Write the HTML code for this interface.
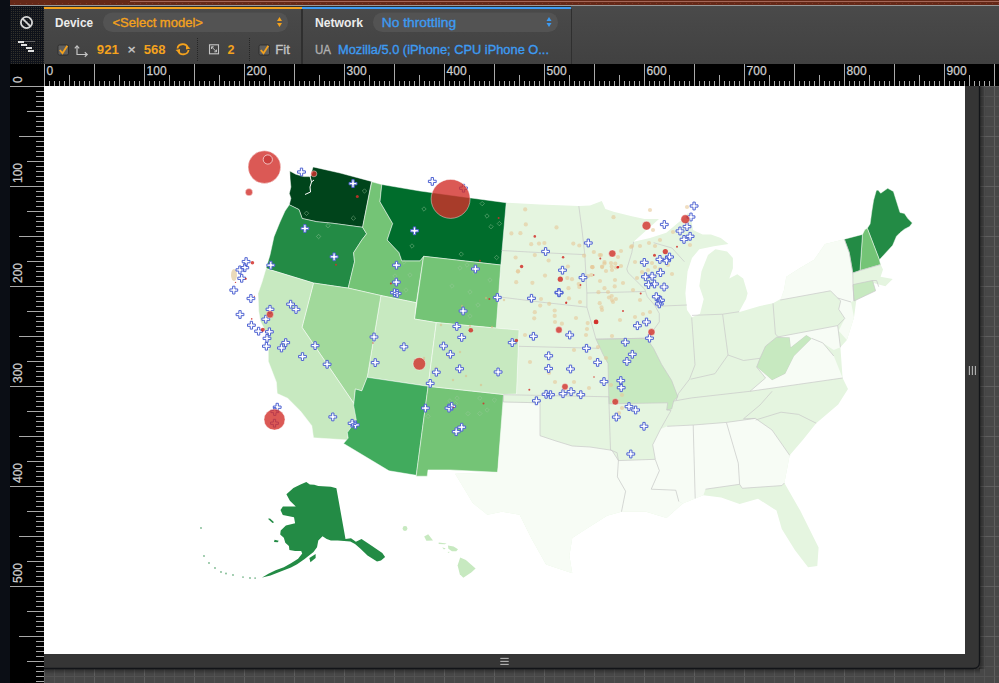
<!DOCTYPE html>
<html><head><meta charset="utf-8"><style>
html,body{margin:0;padding:0;width:999px;height:683px;overflow:hidden;background:#474747}
svg{position:absolute;left:0;top:0;font-family:"Liberation Sans",sans-serif}
</style></head><body>
<svg width="999" height="683" viewBox="0 0 999 683">

<rect x="44" y="86" width="955" height="597" fill="#474747"/>
<line x1="44.5" y1="86" x2="44.5" y2="683" stroke="#5e5e5e"/><line x1="54.5" y1="86" x2="54.5" y2="683" stroke="#525252"/><line x1="64.5" y1="86" x2="64.5" y2="683" stroke="#525252"/><line x1="74.5" y1="86" x2="74.5" y2="683" stroke="#525252"/><line x1="84.5" y1="86" x2="84.5" y2="683" stroke="#525252"/><line x1="94.5" y1="86" x2="94.5" y2="683" stroke="#5e5e5e"/><line x1="104.5" y1="86" x2="104.5" y2="683" stroke="#525252"/><line x1="114.5" y1="86" x2="114.5" y2="683" stroke="#525252"/><line x1="124.5" y1="86" x2="124.5" y2="683" stroke="#525252"/><line x1="134.5" y1="86" x2="134.5" y2="683" stroke="#525252"/><line x1="144.5" y1="86" x2="144.5" y2="683" stroke="#5e5e5e"/><line x1="154.5" y1="86" x2="154.5" y2="683" stroke="#525252"/><line x1="164.5" y1="86" x2="164.5" y2="683" stroke="#525252"/><line x1="174.5" y1="86" x2="174.5" y2="683" stroke="#525252"/><line x1="184.5" y1="86" x2="184.5" y2="683" stroke="#525252"/><line x1="194.5" y1="86" x2="194.5" y2="683" stroke="#5e5e5e"/><line x1="204.5" y1="86" x2="204.5" y2="683" stroke="#525252"/><line x1="214.5" y1="86" x2="214.5" y2="683" stroke="#525252"/><line x1="224.5" y1="86" x2="224.5" y2="683" stroke="#525252"/><line x1="234.5" y1="86" x2="234.5" y2="683" stroke="#525252"/><line x1="244.5" y1="86" x2="244.5" y2="683" stroke="#5e5e5e"/><line x1="254.5" y1="86" x2="254.5" y2="683" stroke="#525252"/><line x1="264.5" y1="86" x2="264.5" y2="683" stroke="#525252"/><line x1="274.5" y1="86" x2="274.5" y2="683" stroke="#525252"/><line x1="284.5" y1="86" x2="284.5" y2="683" stroke="#525252"/><line x1="294.5" y1="86" x2="294.5" y2="683" stroke="#5e5e5e"/><line x1="304.5" y1="86" x2="304.5" y2="683" stroke="#525252"/><line x1="314.5" y1="86" x2="314.5" y2="683" stroke="#525252"/><line x1="324.5" y1="86" x2="324.5" y2="683" stroke="#525252"/><line x1="334.5" y1="86" x2="334.5" y2="683" stroke="#525252"/><line x1="344.5" y1="86" x2="344.5" y2="683" stroke="#5e5e5e"/><line x1="354.5" y1="86" x2="354.5" y2="683" stroke="#525252"/><line x1="364.5" y1="86" x2="364.5" y2="683" stroke="#525252"/><line x1="374.5" y1="86" x2="374.5" y2="683" stroke="#525252"/><line x1="384.5" y1="86" x2="384.5" y2="683" stroke="#525252"/><line x1="394.5" y1="86" x2="394.5" y2="683" stroke="#5e5e5e"/><line x1="404.5" y1="86" x2="404.5" y2="683" stroke="#525252"/><line x1="414.5" y1="86" x2="414.5" y2="683" stroke="#525252"/><line x1="424.5" y1="86" x2="424.5" y2="683" stroke="#525252"/><line x1="434.5" y1="86" x2="434.5" y2="683" stroke="#525252"/><line x1="444.5" y1="86" x2="444.5" y2="683" stroke="#5e5e5e"/><line x1="454.5" y1="86" x2="454.5" y2="683" stroke="#525252"/><line x1="464.5" y1="86" x2="464.5" y2="683" stroke="#525252"/><line x1="474.5" y1="86" x2="474.5" y2="683" stroke="#525252"/><line x1="484.5" y1="86" x2="484.5" y2="683" stroke="#525252"/><line x1="494.5" y1="86" x2="494.5" y2="683" stroke="#5e5e5e"/><line x1="504.5" y1="86" x2="504.5" y2="683" stroke="#525252"/><line x1="514.5" y1="86" x2="514.5" y2="683" stroke="#525252"/><line x1="524.5" y1="86" x2="524.5" y2="683" stroke="#525252"/><line x1="534.5" y1="86" x2="534.5" y2="683" stroke="#525252"/><line x1="544.5" y1="86" x2="544.5" y2="683" stroke="#5e5e5e"/><line x1="554.5" y1="86" x2="554.5" y2="683" stroke="#525252"/><line x1="564.5" y1="86" x2="564.5" y2="683" stroke="#525252"/><line x1="574.5" y1="86" x2="574.5" y2="683" stroke="#525252"/><line x1="584.5" y1="86" x2="584.5" y2="683" stroke="#525252"/><line x1="594.5" y1="86" x2="594.5" y2="683" stroke="#5e5e5e"/><line x1="604.5" y1="86" x2="604.5" y2="683" stroke="#525252"/><line x1="614.5" y1="86" x2="614.5" y2="683" stroke="#525252"/><line x1="624.5" y1="86" x2="624.5" y2="683" stroke="#525252"/><line x1="634.5" y1="86" x2="634.5" y2="683" stroke="#525252"/><line x1="644.5" y1="86" x2="644.5" y2="683" stroke="#5e5e5e"/><line x1="654.5" y1="86" x2="654.5" y2="683" stroke="#525252"/><line x1="664.5" y1="86" x2="664.5" y2="683" stroke="#525252"/><line x1="674.5" y1="86" x2="674.5" y2="683" stroke="#525252"/><line x1="684.5" y1="86" x2="684.5" y2="683" stroke="#525252"/><line x1="694.5" y1="86" x2="694.5" y2="683" stroke="#5e5e5e"/><line x1="704.5" y1="86" x2="704.5" y2="683" stroke="#525252"/><line x1="714.5" y1="86" x2="714.5" y2="683" stroke="#525252"/><line x1="724.5" y1="86" x2="724.5" y2="683" stroke="#525252"/><line x1="734.5" y1="86" x2="734.5" y2="683" stroke="#525252"/><line x1="744.5" y1="86" x2="744.5" y2="683" stroke="#5e5e5e"/><line x1="754.5" y1="86" x2="754.5" y2="683" stroke="#525252"/><line x1="764.5" y1="86" x2="764.5" y2="683" stroke="#525252"/><line x1="774.5" y1="86" x2="774.5" y2="683" stroke="#525252"/><line x1="784.5" y1="86" x2="784.5" y2="683" stroke="#525252"/><line x1="794.5" y1="86" x2="794.5" y2="683" stroke="#5e5e5e"/><line x1="804.5" y1="86" x2="804.5" y2="683" stroke="#525252"/><line x1="814.5" y1="86" x2="814.5" y2="683" stroke="#525252"/><line x1="824.5" y1="86" x2="824.5" y2="683" stroke="#525252"/><line x1="834.5" y1="86" x2="834.5" y2="683" stroke="#525252"/><line x1="844.5" y1="86" x2="844.5" y2="683" stroke="#5e5e5e"/><line x1="854.5" y1="86" x2="854.5" y2="683" stroke="#525252"/><line x1="864.5" y1="86" x2="864.5" y2="683" stroke="#525252"/><line x1="874.5" y1="86" x2="874.5" y2="683" stroke="#525252"/><line x1="884.5" y1="86" x2="884.5" y2="683" stroke="#525252"/><line x1="894.5" y1="86" x2="894.5" y2="683" stroke="#5e5e5e"/><line x1="904.5" y1="86" x2="904.5" y2="683" stroke="#525252"/><line x1="914.5" y1="86" x2="914.5" y2="683" stroke="#525252"/><line x1="924.5" y1="86" x2="924.5" y2="683" stroke="#525252"/><line x1="934.5" y1="86" x2="934.5" y2="683" stroke="#525252"/><line x1="944.5" y1="86" x2="944.5" y2="683" stroke="#5e5e5e"/><line x1="954.5" y1="86" x2="954.5" y2="683" stroke="#525252"/><line x1="964.5" y1="86" x2="964.5" y2="683" stroke="#525252"/><line x1="974.5" y1="86" x2="974.5" y2="683" stroke="#525252"/><line x1="984.5" y1="86" x2="984.5" y2="683" stroke="#525252"/><line x1="994.5" y1="86" x2="994.5" y2="683" stroke="#5e5e5e"/><line x1="44" y1="86.5" x2="999" y2="86.5" stroke="#5e5e5e"/><line x1="44" y1="96.5" x2="999" y2="96.5" stroke="#525252"/><line x1="44" y1="106.5" x2="999" y2="106.5" stroke="#525252"/><line x1="44" y1="116.5" x2="999" y2="116.5" stroke="#525252"/><line x1="44" y1="126.5" x2="999" y2="126.5" stroke="#525252"/><line x1="44" y1="136.5" x2="999" y2="136.5" stroke="#5e5e5e"/><line x1="44" y1="146.5" x2="999" y2="146.5" stroke="#525252"/><line x1="44" y1="156.5" x2="999" y2="156.5" stroke="#525252"/><line x1="44" y1="166.5" x2="999" y2="166.5" stroke="#525252"/><line x1="44" y1="176.5" x2="999" y2="176.5" stroke="#525252"/><line x1="44" y1="186.5" x2="999" y2="186.5" stroke="#5e5e5e"/><line x1="44" y1="196.5" x2="999" y2="196.5" stroke="#525252"/><line x1="44" y1="206.5" x2="999" y2="206.5" stroke="#525252"/><line x1="44" y1="216.5" x2="999" y2="216.5" stroke="#525252"/><line x1="44" y1="226.5" x2="999" y2="226.5" stroke="#525252"/><line x1="44" y1="236.5" x2="999" y2="236.5" stroke="#5e5e5e"/><line x1="44" y1="246.5" x2="999" y2="246.5" stroke="#525252"/><line x1="44" y1="256.5" x2="999" y2="256.5" stroke="#525252"/><line x1="44" y1="266.5" x2="999" y2="266.5" stroke="#525252"/><line x1="44" y1="276.5" x2="999" y2="276.5" stroke="#525252"/><line x1="44" y1="286.5" x2="999" y2="286.5" stroke="#5e5e5e"/><line x1="44" y1="296.5" x2="999" y2="296.5" stroke="#525252"/><line x1="44" y1="306.5" x2="999" y2="306.5" stroke="#525252"/><line x1="44" y1="316.5" x2="999" y2="316.5" stroke="#525252"/><line x1="44" y1="326.5" x2="999" y2="326.5" stroke="#525252"/><line x1="44" y1="336.5" x2="999" y2="336.5" stroke="#5e5e5e"/><line x1="44" y1="346.5" x2="999" y2="346.5" stroke="#525252"/><line x1="44" y1="356.5" x2="999" y2="356.5" stroke="#525252"/><line x1="44" y1="366.5" x2="999" y2="366.5" stroke="#525252"/><line x1="44" y1="376.5" x2="999" y2="376.5" stroke="#525252"/><line x1="44" y1="386.5" x2="999" y2="386.5" stroke="#5e5e5e"/><line x1="44" y1="396.5" x2="999" y2="396.5" stroke="#525252"/><line x1="44" y1="406.5" x2="999" y2="406.5" stroke="#525252"/><line x1="44" y1="416.5" x2="999" y2="416.5" stroke="#525252"/><line x1="44" y1="426.5" x2="999" y2="426.5" stroke="#525252"/><line x1="44" y1="436.5" x2="999" y2="436.5" stroke="#5e5e5e"/><line x1="44" y1="446.5" x2="999" y2="446.5" stroke="#525252"/><line x1="44" y1="456.5" x2="999" y2="456.5" stroke="#525252"/><line x1="44" y1="466.5" x2="999" y2="466.5" stroke="#525252"/><line x1="44" y1="476.5" x2="999" y2="476.5" stroke="#525252"/><line x1="44" y1="486.5" x2="999" y2="486.5" stroke="#5e5e5e"/><line x1="44" y1="496.5" x2="999" y2="496.5" stroke="#525252"/><line x1="44" y1="506.5" x2="999" y2="506.5" stroke="#525252"/><line x1="44" y1="516.5" x2="999" y2="516.5" stroke="#525252"/><line x1="44" y1="526.5" x2="999" y2="526.5" stroke="#525252"/><line x1="44" y1="536.5" x2="999" y2="536.5" stroke="#5e5e5e"/><line x1="44" y1="546.5" x2="999" y2="546.5" stroke="#525252"/><line x1="44" y1="556.5" x2="999" y2="556.5" stroke="#525252"/><line x1="44" y1="566.5" x2="999" y2="566.5" stroke="#525252"/><line x1="44" y1="576.5" x2="999" y2="576.5" stroke="#525252"/><line x1="44" y1="586.5" x2="999" y2="586.5" stroke="#5e5e5e"/><line x1="44" y1="596.5" x2="999" y2="596.5" stroke="#525252"/><line x1="44" y1="606.5" x2="999" y2="606.5" stroke="#525252"/><line x1="44" y1="616.5" x2="999" y2="616.5" stroke="#525252"/><line x1="44" y1="626.5" x2="999" y2="626.5" stroke="#525252"/><line x1="44" y1="636.5" x2="999" y2="636.5" stroke="#5e5e5e"/><line x1="44" y1="646.5" x2="999" y2="646.5" stroke="#525252"/><line x1="44" y1="656.5" x2="999" y2="656.5" stroke="#525252"/><line x1="44" y1="666.5" x2="999" y2="666.5" stroke="#525252"/><line x1="44" y1="676.5" x2="999" y2="676.5" stroke="#525252"/>
<defs>
<linearGradient id="shR" x1="0" y1="0" x2="1" y2="0"><stop offset="0" stop-color="#000" stop-opacity="0.45"/><stop offset="1" stop-color="#000" stop-opacity="0"/></linearGradient>
<linearGradient id="shB" x1="0" y1="0" x2="0" y2="1"><stop offset="0" stop-color="#000" stop-opacity="0.45"/><stop offset="1" stop-color="#000" stop-opacity="0"/></linearGradient>
</defs>
<rect x="979" y="86" width="7" height="583" fill="url(#shR)"/>
<rect x="44" y="668" width="936" height="6" fill="url(#shB)"/>
<rect x="44" y="86" width="935.5" height="582.5" rx="0" fill="#353535"/>
<path d="M979.5,86 L979.5,662 Q979.5,668.5 973,668.5 L44,668.5" fill="none" stroke="#121418" stroke-width="1.3"/>
<rect x="44" y="86" width="921" height="568" fill="#ffffff"/>
<g stroke="#b5b5b5" stroke-width="1.1"><line x1="500.3" y1="658.4" x2="508.7" y2="658.4"/><line x1="500.3" y1="661.4" x2="508.7" y2="661.4"/><line x1="500.3" y1="664.4" x2="508.7" y2="664.4"/></g>
<g stroke="#b5b5b5" stroke-width="1.1"><line x1="969.4" y1="366" x2="969.4" y2="375"/><line x1="972.4" y1="366" x2="972.4" y2="375"/><line x1="975.4" y1="366" x2="975.4" y2="375"/></g>

<g stroke-linejoin="round"><path d="M506.2,202.7 L540.0,204.5 L578.8,206.0 L590.0,205.4 L601.8,200.9 L605.4,209.0 L613.6,211.8 L631.8,216.3 L644.5,219.0 L655.0,219.0 L659.0,219.0 L633.6,241.8 L650.0,238.0 L666.3,232.7 L677.2,223.6 L684.0,218.0 L688.0,213.0 L690.5,215.0 L693.0,230.0 L702.6,234.5 L711.0,234.6 L720.8,238.1 L728.5,244.1 L713.9,246.3 L699.3,249.3 L692.0,258.0 L687.6,271.2 L685.4,293.2 L687.0,310.0 L692.0,317.3 L700.0,313.7 L703.7,299.0 L699.3,285.9 L701.5,271.2 L708.0,255.1 L715.4,249.3 L727.1,251.5 L732.9,258.0 L732.9,268.3 L729.3,278.5 L737.3,274.2 L743.2,278.5 L747.6,293.2 L746.1,299.0 L738.8,312.2 L760.0,306.0 L773.0,303.3 L781.0,298.8 L784.0,290.0 L786.3,276.7 L800.0,268.0 L814.1,259.8 L825.0,244.0 L844.3,239.2 L862.5,234.4 L867.3,228.3 L870.1,223.9 L871.9,210.7 L873.6,200.2 L876.3,190.5 L878.0,190.1 L880.7,193.2 L887.7,188.3 L893.4,191.4 L900.0,212.5 L904.4,213.4 L907.9,218.6 L912.3,223.0 L909.6,226.5 L904.4,229.2 L900.0,232.7 L896.5,236.2 L892.7,245.3 L879.4,259.8 L880.6,264.6 L883.0,269.4 L880.6,276.7 L892.7,279.0 L885.4,286.3 L873.4,283.0 L856.4,299.6 L854.0,317.4 L846.9,340.0 L840.4,347.3 L842.6,378.0 L848.0,389.0 L838.2,404.5 L816.2,423.2 L803.0,439.7 L789.7,455.3 L784.4,483.0 L800.2,510.6 L818.6,547.5 L817.3,566.0 L808.1,567.3 L795.0,550.2 L781.8,529.0 L776.5,510.6 L758.0,498.8 L739.6,504.0 L721.2,497.5 L703.4,495.3 L695.2,498.4 L682.9,503.5 L666.5,517.9 L646.0,511.7 L621.5,511.7 L607.1,515.8 L584.6,530.1 L572.3,538.0 L569.4,555.7 L572.3,573.3 L546.0,564.5 L531.3,538.2 L519.6,514.7 L502.0,511.8 L487.4,514.7 L472.7,503.0 L455.1,473.7 L497.6,472.3 L503.5,394.5 L516.5,394.0 L519.0,330.0 L496.2,328.1 L500.8,265.0 Z" fill="#e5f5e0"/><path d="M289.8,171.0 L295.7,174.2 L303.8,176.6 L310.2,176.6 L313.1,166.9 L340.0,173.0 L371.5,181.4 L362.6,227.3 L332.8,223.3 L316.7,221.7 L302.2,218.5 L299.0,209.6 L289.3,204.8 L290.9,198.3 L289.3,193.5 L290.9,187.0 L290.1,179.0 Z" fill="#00441b" stroke="#ffffff" stroke-opacity="0.6" stroke-width="0.8"/><path d="M289.3,204.8 L299.0,209.6 L302.2,218.5 L316.7,221.7 L332.8,223.3 L362.6,227.3 L366.6,233.8 L361.8,240.0 L353.6,252.7 L354.5,261.8 L348.2,288.1 L313.5,283.0 L266.0,268.5 L270.0,255.0 L274.0,236.7 L280.0,222.0 L285.0,211.0 Z" fill="#238b45" stroke="#ffffff" stroke-opacity="0.6" stroke-width="0.8"/><path d="M371.8,181.8 L381.8,184.5 L380.0,201.8 L392.7,223.6 L387.2,240.0 L399.0,252.6 L401.8,260.8 L420.0,260.8 L423.6,256.3 L416.3,302.7 L380.9,295.5 L348.2,288.1 L354.5,261.8 L353.6,252.7 L361.8,240.0 L366.6,233.8 L362.6,227.3 Z" fill="#74c476" stroke="#ffffff" stroke-opacity="0.6" stroke-width="0.8"/><path d="M381.8,184.5 L420.0,191.0 L460.0,196.5 L506.2,202.7 L500.8,265.0 L423.6,256.3 L420.0,260.8 L401.8,260.8 L399.0,252.6 L387.2,240.0 L392.7,223.6 L380.0,201.8 Z" fill="#006d2c" stroke="#ffffff" stroke-opacity="0.6" stroke-width="0.8"/><path d="M423.6,256.3 L500.8,265.0 L496.2,328.1 L436.3,322.6 L414.5,319.0 Z" fill="#74c476" stroke="#ffffff" stroke-opacity="0.6" stroke-width="0.8"/><path d="M380.9,295.5 L416.3,302.7 L414.5,319.0 L436.3,322.6 L428.1,386.3 L367.2,377.3 Z" fill="#c7e9c0" stroke="#ffffff" stroke-opacity="0.6" stroke-width="0.8"/><path d="M313.5,283.0 L348.2,288.1 L380.9,295.5 L367.2,377.3 L361.8,390.9 L355.4,389.0 L353.7,403.2 L302.0,327.3 Z" fill="#a1d99b" stroke="#ffffff" stroke-opacity="0.6" stroke-width="0.8"/><path d="M266.0,268.5 L313.5,283.0 L302.0,327.3 L353.7,403.2 L356.5,419.0 L347.5,433.0 L348.5,440.0 L313.5,437.8 L311.8,425.7 L300.6,411.2 L287.7,398.3 L277.2,393.5 L276.4,382.2 L268.3,361.3 L268.3,350.0 L270.0,346.7 L268.3,337.0 L260.3,321.0 L258.7,311.0 L258.0,293.5 L262.0,282.0 Z" fill="#c7e9c0" stroke="#ffffff" stroke-opacity="0.6" stroke-width="0.8"/><path d="M367.2,377.3 L428.1,386.3 L416.3,475.3 L389.0,470.8 L343.6,443.5 L348.2,438.1 L347.3,432.6 L356.3,420.0 L353.6,405.4 L355.4,389.0 L361.8,390.9 Z" fill="#41ab5d" stroke="#ffffff" stroke-opacity="0.6" stroke-width="0.8"/><path d="M428.1,386.3 L503.5,394.5 L497.6,472.3 L449.9,469.9 L428.0,469.9 L427.2,476.2 L416.3,476.2 L416.3,475.3 Z" fill="#74c476" stroke="#ffffff" stroke-opacity="0.6" stroke-width="0.8"/><path d="M436.3,322.6 L496.2,328.1 L519.0,330.0 L516.5,394.0 L503.5,394.5 L428.1,386.3 Z" fill="#c7e9c0" stroke="#ffffff" stroke-opacity="0.6" stroke-width="0.8"/><path d="M503.5,402.0 L540.0,403.4 L540.0,435.7 L556.0,441.0 L572.3,446.0 L590.0,447.0 L611.9,450.3 L618.4,460.5 L617.4,476.9 L625.6,491.2 L621.5,511.7 L607.1,515.8 L584.6,530.1 L572.3,538.0 L569.4,555.7 L572.3,573.3 L546.0,564.5 L531.3,538.2 L519.6,514.7 L502.0,511.8 L487.4,514.7 L472.7,503.0 L455.1,473.7 L497.6,472.3 Z" fill="#f7fcf5"/><path d="M596.0,339.2 L646.5,338.2 L653.5,348.3 L661.6,364.4 L671.7,380.6 L677.8,396.8 L673.7,400.8 L671.7,408.9 L666.7,409.9 L667.7,402.8 L609.0,403.8 L608.0,363.4 L603.0,354.3 Z" fill="#c7e9c0" stroke="#c9c9c9" stroke-width="0.7"/><path d="M760.0,358.3 L765.5,346.2 L776.5,337.3 L789.7,337.3 L790.8,347.3 L806.3,335.1 L811.8,338.4 L794.1,356.1 L785.3,373.7 L772.1,380.3 L756.7,367.0 Z" fill="#c7e9c0" stroke="#c9c9c9" stroke-width="0.7"/><path d="M655.3,459.5 L652.7,444.8 L660.6,429.0 L667.2,426.3 L693.2,425.0 L695.2,498.4 L682.9,503.5 L678.8,501.5 L675.8,490.2 L651.2,489.2 L659.4,470.7 Z" fill="#f7fcf5"/><path d="M693.2,425.0 L726.4,422.4 L738.3,463.2 L739.6,484.3 L705.5,489.2 L703.4,495.3 L695.2,498.4 Z" fill="#f7fcf5"/><path d="M726.4,422.4 L755.4,418.4 L772.0,430.0 L789.7,455.3 L784.4,483.0 L781.8,485.6 L742.3,488.3 L739.6,484.3 L738.3,463.2 Z" fill="#f7fcf5"/><path d="M618.4,460.5 L655.3,459.5 L659.4,470.7 L651.2,489.2 L675.8,490.2 L678.8,501.5 L682.9,503.5 L666.5,517.9 L646.0,511.7 L621.5,511.7 L625.6,491.2 L617.4,476.9 Z" fill="#f7fcf5"/><path d="M756.7,367.0 L772.1,380.3 L785.3,373.7 L794.1,356.1 L811.8,338.4 L822.8,342.9 L833.8,356.0 L842.6,378.0 L750.0,391.3 L765.5,378.0 Z" fill="#f7fcf5"/><path d="M780.3,300.0 L784.0,290.0 L786.3,276.7 L800.0,268.0 L814.1,259.8 L825.0,244.0 L844.3,239.2 L849.2,252.5 L852.8,273.0 L854.0,300.8 L851.0,302.0 L837.7,298.0 L830.5,290.8 Z" fill="#f7fcf5"/><path d="M837.7,298.0 L851.0,302.0 L854.0,317.4 L846.9,340.0 L838.7,330.7 L844.8,318.4 L838.7,309.2 L840.7,301.0 Z" fill="#f7fcf5"/><path d="M778.2,336.9 L837.7,325.6 L840.4,347.3 L833.8,350.0 L822.8,342.9 L811.8,338.4 L806.3,335.1 L790.8,347.3 L789.7,337.3 Z" fill="#f7fcf5"/><path d="M876.3,190.5 L878.0,190.1 L880.7,193.2 L887.7,188.3 L893.4,191.4 L900.0,212.5 L904.4,213.4 L907.9,218.6 L912.3,223.0 L909.6,226.5 L904.4,229.2 L900.0,232.7 L896.5,236.2 L892.7,245.3 L879.4,259.8 L867.3,228.3 L870.1,223.9 L871.9,210.7 L873.6,200.2 Z" fill="#238b45" stroke="#ffffff" stroke-opacity="0.6" stroke-width="0.8"/><path d="M864.9,229.5 L867.3,228.3 L879.4,259.8 L880.6,264.6 L860.0,270.6 L862.5,234.4 Z" fill="#74c476" stroke="#ffffff" stroke-opacity="0.6" stroke-width="0.8"/><path d="M844.3,239.2 L862.5,234.4 L860.0,270.6 L852.8,273.0 L849.2,252.5 Z" fill="#238b45" stroke="#ffffff" stroke-opacity="0.6" stroke-width="0.8"/><path d="M853.0,284.6 L872.5,280.5 L875.6,290.8 L854.0,301.0 Z" fill="#c7e9c0" stroke="#c9c9c9" stroke-width="0.7"/><path d="M286.4,494.3 L293.4,487.9 L300.5,484.4 L306.3,482.0 L309.8,484.4 L314.2,484.7 L318.3,486.1 L330.9,486.8 L336.4,488.2 L345.5,539.0 L351.0,538.3 L355.9,541.8 L361.5,539.0 L369.8,544.6 L382.3,552.9 L385.1,557.1 L381.0,560.5 L377.0,561.5 L367.5,555.5 L360.5,548.8 L355.0,544.0 L350.3,541.5 L337.8,540.4 L330.9,540.4 L326.7,539.0 L322.5,536.2 L318.3,540.4 L317.0,547.3 L313.5,552.0 L304.3,559.2 L297.1,564.3 L291.0,567.4 L280.7,571.5 L270.5,575.6 L262.3,577.6 L261.3,578.1 L268.4,573.8 L275.6,570.3 L283.8,567.3 L291.0,563.3 L298.1,558.8 L302.2,553.5 L301.2,551.0 L295.1,551.0 L289.4,550.0 L288.9,545.9 L285.3,542.8 L283.8,537.7 L280.2,534.6 L280.7,530.5 L285.9,525.4 L295.1,523.3 L294.0,517.2 L282.8,515.1 L280.5,510.1 L282.9,506.6 L295.8,506.6 L289.9,500.8 Z" fill="#238b45"/><path d="M309.4,558.1 L315.6,554.0 L315.6,558.1 L310.4,562.2 Z" fill="#238b45"/><path d="M274.6,539.7 L278.7,540.7 L277.7,542.3 L274.0,542.0 Z" fill="#238b45"/><path d="M267.9,518.7 L270.0,518.5 L274.1,522.3 L272.5,523.0 Z" fill="#238b45"/><circle cx="243" cy="577.1" r="0.9" fill="#238b45" opacity="0.6"/><circle cx="233" cy="575" r="0.9" fill="#238b45" opacity="0.6"/><circle cx="221" cy="572" r="0.9" fill="#238b45" opacity="0.6"/><circle cx="215" cy="568" r="0.9" fill="#238b45" opacity="0.6"/><circle cx="204" cy="556" r="0.9" fill="#238b45" opacity="0.6"/><circle cx="201" cy="528" r="0.9" fill="#238b45" opacity="0.6"/><circle cx="255.1" cy="578.1" r="0.9" fill="#238b45" opacity="0.6"/><circle cx="250" cy="578" r="0.9" fill="#238b45" opacity="0.6"/><circle cx="226" cy="573.5" r="0.9" fill="#238b45" opacity="0.6"/><circle cx="209" cy="563" r="0.9" fill="#238b45" opacity="0.6"/><path d="M424.2,536.4 L428.2,534.2 L433.0,540.4 L426.4,540.8 Z" fill="#c7e9c0"/><path d="M438.7,542.6 L446.6,543.4 L444.9,544.3 L438.7,543.9 Z" fill="#c7e9c0"/><path d="M442.2,547.4 L445.7,548.3 L444.0,549.6 Z" fill="#c7e9c0"/><path d="M447.9,545.6 L453.6,546.5 L458.0,549.2 L456.3,551.3 L451.9,551.3 L448.4,548.7 Z" fill="#c7e9c0"/><path d="M447.5,552.0 L449.5,551.8 L449.0,553.0 Z" fill="#c7e9c0"/><path d="M460.2,557.5 L465.9,560.1 L475.6,568.5 L471.2,572.4 L463.3,577.7 L459.8,574.2 L457.6,565.4 Z" fill="#c7e9c0"/><circle cx="405" cy="528.5" r="2.4" fill="#c7e9c0"/><path d="M313,172 L310,176 L311.5,182 L310,187 L310.5,192 L305,194.5 M311.5,182 L314,180" fill="none" stroke="#fff" stroke-width="1"/><ellipse cx="234" cy="275" rx="3" ry="6" fill="#e6d3ae" opacity="0.85"/><path d="M501.6,250.5 L540.0,252.6 L584.8,254.6" fill="none" stroke="#c9c9c9" stroke-width="0.7"/><path d="M500.2,297.0 L540.0,302.0 L586.9,307.2" fill="none" stroke="#c9c9c9" stroke-width="0.7"/><path d="M519.0,346.3 L599.0,348.3" fill="none" stroke="#c9c9c9" stroke-width="0.7"/><path d="M504.0,394.7 L609.0,396.8" fill="none" stroke="#c9c9c9" stroke-width="0.7"/><path d="M503.5,402.0 L540.4,402.8" fill="none" stroke="#c9c9c9" stroke-width="0.7"/><path d="M578.8,206.0 L582.0,230.0 L584.8,254.6 L586.9,293.0 L586.9,307.2 L592.0,325.0 L596.0,339.2" fill="none" stroke="#c9c9c9" stroke-width="0.7"/><path d="M586.9,293.0 L644.9,291.5" fill="none" stroke="#c9c9c9" stroke-width="0.7"/><path d="M596.0,339.2 L646.5,338.2" fill="none" stroke="#c9c9c9" stroke-width="0.7"/><path d="M633.6,241.8 L631.8,252.6 L626.8,269.0 L628.0,272.6 L644.9,289.4 L647.3,296.7 L654.5,305.0 L659.3,313.5 L659.3,321.9 L653.5,330.0 L646.5,338.2" fill="none" stroke="#c9c9c9" stroke-width="0.7"/><path d="M656.0,306.3 L686.9,305.0" fill="none" stroke="#c9c9c9" stroke-width="0.7"/><path d="M653.6,242.7 L672.0,248.0 L684.4,261.7" fill="none" stroke="#c9c9c9" stroke-width="0.7"/><path d="M609.0,396.8 L609.0,403.8 L610.5,450.0 L617.1,452.7 L618.4,460.6 L655.3,459.3" fill="none" stroke="#c9c9c9" stroke-width="0.7"/><path d="M540.0,403.4 L540.0,435.7 L556.0,441.0 L572.3,446.0 L590.0,447.0 L611.9,450.3" fill="none" stroke="#c9c9c9" stroke-width="0.7"/><path d="M666.7,409.9 L671.0,410.5 L660.6,429.0 L652.7,444.8 L655.3,459.3" fill="none" stroke="#c9c9c9" stroke-width="0.7"/><path d="M667.2,426.3 L693.5,425.0 L726.4,422.4 L755.4,418.4 L743.5,418.8" fill="none" stroke="#c9c9c9" stroke-width="0.7"/><path d="M691.7,317.5 L695.0,364.9 L689.5,379.2 L678.5,393.5 L676.3,400.1" fill="none" stroke="#c9c9c9" stroke-width="0.7"/><path d="M692.0,315.4 L722.6,314.2 L739.2,311.7" fill="none" stroke="#c9c9c9" stroke-width="0.7"/><path d="M722.6,314.2 L728.0,355.0" fill="none" stroke="#c9c9c9" stroke-width="0.7"/><path d="M690.6,379.2 L714.9,373.7 L728.0,355.0 L743.5,360.5 L760.0,358.3" fill="none" stroke="#c9c9c9" stroke-width="0.7"/><path d="M673.0,401.2 L691.7,397.9 L750.0,391.3 L842.6,378.0" fill="none" stroke="#c9c9c9" stroke-width="0.7"/><path d="M772.1,391.3 L760.0,405.0 L743.5,418.8" fill="none" stroke="#c9c9c9" stroke-width="0.7"/><path d="M755.6,420.0 L781.0,412.2 L798.6,414.4 L816.2,423.2" fill="none" stroke="#c9c9c9" stroke-width="0.7"/><path d="M773.0,303.3 L775.4,334.0 L778.2,336.9" fill="none" stroke="#c9c9c9" stroke-width="0.7"/><path d="M618.4,460.5 L617.4,476.9 L625.6,491.2 L621.5,511.7" fill="none" stroke="#c9c9c9" stroke-width="0.7"/><path d="M611.9,450.3 L618.4,460.5" fill="none" stroke="#c9c9c9" stroke-width="0.7"/><path d="M655.3,459.5 L659.4,470.7 L651.2,489.2 L675.8,490.2 L678.8,501.5" fill="none" stroke="#c9c9c9" stroke-width="0.7"/><path d="M693.2,425.0 L695.2,498.4" fill="none" stroke="#c9c9c9" stroke-width="0.7"/><path d="M726.4,422.4 L738.3,463.2 L739.6,484.3" fill="none" stroke="#c9c9c9" stroke-width="0.7"/><path d="M705.5,489.2 L739.6,484.3 L742.3,488.3 L781.8,485.6 L784.4,483.0" fill="none" stroke="#c9c9c9" stroke-width="0.7"/><path d="M755.4,418.4 L772.0,430.0 L789.7,455.3" fill="none" stroke="#c9c9c9" stroke-width="0.7"/><path d="M750.0,391.3 L765.5,378.0 L756.7,367.0" fill="none" stroke="#c9c9c9" stroke-width="0.7"/><path d="M811.8,338.4 L822.8,342.9 L833.8,356.0" fill="none" stroke="#c9c9c9" stroke-width="0.7"/><path d="M778.2,336.9 L837.7,325.6 L840.4,347.3" fill="none" stroke="#c9c9c9" stroke-width="0.7"/><path d="M780.3,300.0 L830.5,290.8 L837.7,298.0 L851.0,302.0" fill="none" stroke="#c9c9c9" stroke-width="0.7"/><path d="M837.7,298.0 L840.7,301.0 L838.7,309.2 L844.8,318.4 L837.7,325.6" fill="none" stroke="#c9c9c9" stroke-width="0.7"/><path d="M844.3,239.2 L849.2,252.5 L852.8,273.0 L853.0,284.6 L854.0,301.0" fill="none" stroke="#c9c9c9" stroke-width="0.7"/><path d="M852.8,273.0 L860.0,270.6 L880.6,264.6" fill="none" stroke="#c9c9c9" stroke-width="0.7"/><path d="M872.5,280.5 L876.6,280.5 L878.7,286.7" fill="none" stroke="#c9c9c9" stroke-width="0.7"/><path d="M503.5,402.0 L503.5,394.5" fill="none" stroke="#c9c9c9" stroke-width="0.7"/><circle cx="525.2" cy="209.4" r="2.1" fill="#e6c898" opacity="0.6"/><circle cx="525.8" cy="224.4" r="2.1" fill="#e6c898" opacity="0.6"/><circle cx="556.5" cy="227.4" r="2.1" fill="#e6c898" opacity="0.6"/><circle cx="511.4" cy="233.4" r="2.1" fill="#e6c898" opacity="0.6"/><circle cx="520.4" cy="233.2" r="2.1" fill="#e6c898" opacity="0.6"/><circle cx="531.2" cy="244.2" r="2.1" fill="#e6c898" opacity="0.6"/><circle cx="539" cy="243.6" r="2.1" fill="#e6c898" opacity="0.6"/><circle cx="544.4" cy="243" r="2.1" fill="#e6c898" opacity="0.6"/><circle cx="573.3" cy="243.6" r="2.1" fill="#e6c898" opacity="0.6"/><circle cx="579.3" cy="245.5" r="2.1" fill="#e6c898" opacity="0.6"/><circle cx="613.5" cy="217.2" r="2.1" fill="#e6c898" opacity="0.6"/><circle cx="515.6" cy="257.5" r="2.1" fill="#e6c898" opacity="0.6"/><circle cx="534.8" cy="255.1" r="2.1" fill="#e6c898" opacity="0.6"/><circle cx="548.6" cy="260.5" r="2.1" fill="#e6c898" opacity="0.6"/><circle cx="584.1" cy="255.7" r="2.1" fill="#e6c898" opacity="0.6"/><circle cx="599.7" cy="255.1" r="2.1" fill="#e6c898" opacity="0.6"/><circle cx="604.5" cy="263.5" r="2.1" fill="#e6c898" opacity="0.6"/><circle cx="602.1" cy="267.1" r="2.1" fill="#e6c898" opacity="0.6"/><circle cx="611.7" cy="266.5" r="2.1" fill="#e6c898" opacity="0.6"/><circle cx="592.5" cy="267.1" r="2.1" fill="#e6c898" opacity="0.6"/><circle cx="567.9" cy="266.5" r="2.1" fill="#e6c898" opacity="0.6"/><circle cx="518" cy="271.3" r="2.1" fill="#e6c898" opacity="0.6"/><circle cx="615.3" cy="263.5" r="2.1" fill="#e6c898" opacity="0.6"/><circle cx="518" cy="271.4" r="2.1" fill="#e6c898" opacity="0.6"/><circle cx="545" cy="275.6" r="2.1" fill="#e6c898" opacity="0.6"/><circle cx="516.2" cy="282.2" r="2.1" fill="#e6c898" opacity="0.6"/><circle cx="532.4" cy="282.8" r="2.1" fill="#e6c898" opacity="0.6"/><circle cx="567.3" cy="278" r="2.1" fill="#e6c898" opacity="0.6"/><circle cx="572" cy="279.2" r="2.1" fill="#e6c898" opacity="0.6"/><circle cx="568.5" cy="288.2" r="2.1" fill="#e6c898" opacity="0.6"/><circle cx="578.7" cy="284" r="2.1" fill="#e6c898" opacity="0.6"/><circle cx="579.3" cy="287" r="2.1" fill="#e6c898" opacity="0.6"/><circle cx="569" cy="298.4" r="2.1" fill="#e6c898" opacity="0.6"/><circle cx="540.2" cy="305.6" r="2.1" fill="#e6c898" opacity="0.6"/><circle cx="549.2" cy="303.8" r="2.1" fill="#e6c898" opacity="0.6"/><circle cx="554.7" cy="310.5" r="2.1" fill="#e6c898" opacity="0.6"/><circle cx="534.8" cy="312.2" r="2.1" fill="#e6c898" opacity="0.6"/><circle cx="554.7" cy="315.9" r="2.1" fill="#e6c898" opacity="0.6"/><circle cx="534.2" cy="318.3" r="2.1" fill="#e6c898" opacity="0.6"/><circle cx="561.9" cy="323.7" r="2.1" fill="#e6c898" opacity="0.6"/><circle cx="587.7" cy="323.1" r="2.1" fill="#e6c898" opacity="0.6"/><circle cx="592.5" cy="267.2" r="2.1" fill="#e6c898" opacity="0.6"/><circle cx="591.3" cy="275" r="2.1" fill="#e6c898" opacity="0.6"/><circle cx="602.1" cy="266.6" r="2.1" fill="#e6c898" opacity="0.6"/><circle cx="604.5" cy="288.2" r="2.1" fill="#e6c898" opacity="0.6"/><circle cx="614.7" cy="286.4" r="2.1" fill="#e6c898" opacity="0.6"/><circle cx="598.5" cy="292.2" r="2.1" fill="#e6c898" opacity="0.6"/><circle cx="611.7" cy="296" r="2.1" fill="#e6c898" opacity="0.6"/><circle cx="615.9" cy="299" r="2.1" fill="#e6c898" opacity="0.6"/><circle cx="599.7" cy="303.2" r="2.1" fill="#e6c898" opacity="0.6"/><circle cx="601.5" cy="307.4" r="2.1" fill="#e6c898" opacity="0.6"/><circle cx="609" cy="297.5" r="2.1" fill="#e6c898" opacity="0.6"/><circle cx="612" cy="300" r="2.1" fill="#e6c898" opacity="0.6"/><circle cx="593.8" cy="252" r="2.1" fill="#e6c898" opacity="0.6"/><circle cx="601" cy="255" r="2.1" fill="#e6c898" opacity="0.6"/><circle cx="604.5" cy="262" r="2.1" fill="#e6c898" opacity="0.6"/><circle cx="611" cy="263" r="2.1" fill="#e6c898" opacity="0.6"/><circle cx="616" cy="267.5" r="2.1" fill="#e6c898" opacity="0.6"/><circle cx="612" cy="270" r="2.1" fill="#e6c898" opacity="0.6"/><circle cx="621" cy="266" r="2.1" fill="#e6c898" opacity="0.6"/><circle cx="606" cy="271" r="2.1" fill="#e6c898" opacity="0.6"/><circle cx="592" cy="267" r="2.1" fill="#e6c898" opacity="0.6"/><circle cx="618" cy="257" r="2.1" fill="#e6c898" opacity="0.6"/><circle cx="635" cy="262" r="2.1" fill="#e6c898" opacity="0.6"/><circle cx="637" cy="278" r="2.1" fill="#e6c898" opacity="0.6"/><circle cx="642" cy="272" r="2.1" fill="#e6c898" opacity="0.6"/><circle cx="648" cy="270" r="2.1" fill="#e6c898" opacity="0.6"/><circle cx="655" cy="267" r="2.1" fill="#e6c898" opacity="0.6"/><circle cx="652" cy="263" r="2.1" fill="#e6c898" opacity="0.6"/><circle cx="660" cy="269" r="2.1" fill="#e6c898" opacity="0.6"/><circle cx="668" cy="265" r="2.1" fill="#e6c898" opacity="0.6"/><circle cx="672" cy="274" r="2.1" fill="#e6c898" opacity="0.6"/><circle cx="640" cy="300" r="2.1" fill="#e6c898" opacity="0.6"/><circle cx="633" cy="290" r="2.1" fill="#e6c898" opacity="0.6"/><circle cx="623" cy="283" r="2.1" fill="#e6c898" opacity="0.6"/><circle cx="615" cy="280" r="2.1" fill="#e6c898" opacity="0.6"/><circle cx="608" cy="292" r="2.1" fill="#e6c898" opacity="0.6"/><circle cx="613" cy="302" r="2.1" fill="#e6c898" opacity="0.6"/><circle cx="602" cy="310" r="2.1" fill="#e6c898" opacity="0.6"/><circle cx="620" cy="320" r="2.1" fill="#e6c898" opacity="0.6"/><circle cx="635" cy="317" r="2.1" fill="#e6c898" opacity="0.6"/><circle cx="643" cy="314" r="2.1" fill="#e6c898" opacity="0.6"/><circle cx="650" cy="312" r="2.1" fill="#e6c898" opacity="0.6"/><circle cx="587" cy="329" r="2.1" fill="#e6c898" opacity="0.6"/><circle cx="612" cy="336" r="2.1" fill="#e6c898" opacity="0.6"/><circle cx="598" cy="347" r="2.1" fill="#e6c898" opacity="0.6"/><circle cx="606" cy="358" r="2.1" fill="#e6c898" opacity="0.6"/><circle cx="590" cy="358" r="2.1" fill="#e6c898" opacity="0.6"/><circle cx="660" cy="240" r="2.1" fill="#e6c898" opacity="0.6"/><circle cx="673" cy="232" r="2.1" fill="#e6c898" opacity="0.6"/><circle cx="690" cy="245" r="2.1" fill="#e6c898" opacity="0.6"/><circle cx="687" cy="207" r="2.1" fill="#e6c898" opacity="0.6"/><circle cx="650" cy="210" r="2.1" fill="#e6c898" opacity="0.6"/><circle cx="653" cy="230" r="2.1" fill="#e6c898" opacity="0.6"/><circle cx="649" cy="243" r="2.1" fill="#e6c898" opacity="0.6"/><circle cx="655" cy="246" r="2.1" fill="#e6c898" opacity="0.6"/><circle cx="640" cy="246" r="2.1" fill="#e6c898" opacity="0.6"/><circle cx="632" cy="246" r="2.1" fill="#e6c898" opacity="0.6"/><circle cx="525" cy="335" r="2.1" fill="#e6c898" opacity="0.6"/><circle cx="555" cy="322" r="2.1" fill="#e6c898" opacity="0.6"/><circle cx="576" cy="318" r="2.1" fill="#e6c898" opacity="0.6"/><circle cx="586" cy="335" r="2.1" fill="#e6c898" opacity="0.6"/><circle cx="574" cy="350" r="2.1" fill="#e6c898" opacity="0.6"/><circle cx="549" cy="373" r="2.1" fill="#e6c898" opacity="0.6"/><circle cx="530" cy="362" r="2.1" fill="#e6c898" opacity="0.6"/><circle cx="555" cy="382" r="2.1" fill="#e6c898" opacity="0.6"/><circle cx="574" cy="382" r="2.1" fill="#e6c898" opacity="0.6"/><circle cx="589" cy="388" r="2.1" fill="#e6c898" opacity="0.6"/><circle cx="611" cy="385" r="2.1" fill="#e6c898" opacity="0.6"/><circle cx="622" cy="395" r="2.1" fill="#e6c898" opacity="0.6"/><circle cx="622" cy="408" r="2.1" fill="#e6c898" opacity="0.6"/><circle cx="619" cy="413" r="2.1" fill="#e6c898" opacity="0.6"/><circle cx="580" cy="302" r="2.1" fill="#e6c898" opacity="0.6"/><circle cx="541" cy="299" r="2.1" fill="#e6c898" opacity="0.6"/><circle cx="588" cy="276" r="2.1" fill="#e6c898" opacity="0.6"/><circle cx="600" cy="281" r="2.1" fill="#e6c898" opacity="0.6"/><circle cx="621" cy="251" r="2.1" fill="#e6c898" opacity="0.6"/><circle cx="631" cy="247" r="2.1" fill="#e6c898" opacity="0.6"/><circle cx="486" cy="298" r="1.2" fill="#e0b880" opacity="0.5"/><circle cx="462" cy="306" r="1.2" fill="#e0b880" opacity="0.5"/><circle cx="441" cy="325" r="1.2" fill="#e0b880" opacity="0.5"/><circle cx="470" cy="326" r="1.2" fill="#e0b880" opacity="0.5"/><circle cx="492" cy="327" r="1.2" fill="#e0b880" opacity="0.5"/><circle cx="504" cy="300" r="1.2" fill="#e0b880" opacity="0.5"/><circle cx="460" cy="352" r="1.2" fill="#e0b880" opacity="0.5"/><circle cx="448" cy="356" r="1.2" fill="#e0b880" opacity="0.5"/><circle cx="424" cy="358" r="1.2" fill="#e0b880" opacity="0.5"/><circle cx="481" cy="385" r="1.2" fill="#e0b880" opacity="0.5"/><circle cx="453" cy="380" r="1.2" fill="#e0b880" opacity="0.5"/><circle cx="436" cy="368" r="1.2" fill="#e0b880" opacity="0.5"/><circle cx="466" cy="376" r="1.2" fill="#e0b880" opacity="0.5"/><path d="M364.5,188.8 L366.7,191 L364.5,193.2 L362.3,191 Z" fill="none" stroke="#9cc89f" stroke-width="0.8" opacity="0.55"/><path d="M306.5,211.10000000000002 L308.7,213.3 L306.5,215.5 L304.3,213.3 Z" fill="none" stroke="#9cc89f" stroke-width="0.8" opacity="0.55"/><path d="M353.4,216.0 L355.59999999999997,218.2 L353.4,220.39999999999998 L351.2,218.2 Z" fill="none" stroke="#9cc89f" stroke-width="0.8" opacity="0.55"/><path d="M318.6,234.3 L320.8,236.5 L318.6,238.7 L316.40000000000003,236.5 Z" fill="none" stroke="#9cc89f" stroke-width="0.8" opacity="0.55"/><path d="M328,223.5 L330.2,225.7 L328,227.89999999999998 L325.8,225.7 Z" fill="none" stroke="#9cc89f" stroke-width="0.8" opacity="0.55"/><path d="M482.2,201.4 L484.4,203.6 L482.2,205.79999999999998 L480.0,203.6 Z" fill="none" stroke="#9cc89f" stroke-width="0.8" opacity="0.55"/><path d="M499.4,221.4 L501.59999999999997,223.6 L499.4,225.79999999999998 L497.2,223.6 Z" fill="none" stroke="#9cc89f" stroke-width="0.8" opacity="0.55"/><path d="M491,224.5 L493.2,226.7 L491,228.89999999999998 L488.8,226.7 Z" fill="none" stroke="#9cc89f" stroke-width="0.8" opacity="0.55"/><path d="M461.2,251.9 L463.4,254.1 L461.2,256.3 L459.0,254.1 Z" fill="none" stroke="#9cc89f" stroke-width="0.8" opacity="0.55"/><path d="M496.6,255.3 L498.8,257.5 L496.6,259.7 L494.40000000000003,257.5 Z" fill="none" stroke="#9cc89f" stroke-width="0.8" opacity="0.55"/><path d="M487,213.8 L489.2,216 L487,218.2 L484.8,216 Z" fill="none" stroke="#9cc89f" stroke-width="0.8" opacity="0.55"/><path d="M404,259.8 L406.2,262 L404,264.2 L401.8,262 Z" fill="none" stroke="#9cc89f" stroke-width="0.8" opacity="0.55"/><path d="M410,272.8 L412.2,275 L410,277.2 L407.8,275 Z" fill="none" stroke="#9cc89f" stroke-width="0.8" opacity="0.55"/><path d="M395,273.8 L397.2,276 L395,278.2 L392.8,276 Z" fill="none" stroke="#9cc89f" stroke-width="0.8" opacity="0.55"/><path d="M406,287.8 L408.2,290 L406,292.2 L403.8,290 Z" fill="none" stroke="#9cc89f" stroke-width="0.8" opacity="0.55"/><path d="M467,262.8 L469.2,265 L467,267.2 L464.8,265 Z" fill="none" stroke="#9cc89f" stroke-width="0.8" opacity="0.55"/><path d="M474,269.8 L476.2,272 L474,274.2 L471.8,272 Z" fill="none" stroke="#9cc89f" stroke-width="0.8" opacity="0.55"/><path d="M460,265.8 L462.2,268 L460,270.2 L457.8,268 Z" fill="none" stroke="#9cc89f" stroke-width="0.8" opacity="0.55"/><path d="M490,277.8 L492.2,280 L490,282.2 L487.8,280 Z" fill="none" stroke="#9cc89f" stroke-width="0.8" opacity="0.55"/><path d="M452,283.8 L454.2,286 L452,288.2 L449.8,286 Z" fill="none" stroke="#9cc89f" stroke-width="0.8" opacity="0.55"/><path d="M470,289.8 L472.2,292 L470,294.2 L467.8,292 Z" fill="none" stroke="#9cc89f" stroke-width="0.8" opacity="0.55"/><path d="M478,302.8 L480.2,305 L478,307.2 L475.8,305 Z" fill="none" stroke="#9cc89f" stroke-width="0.8" opacity="0.55"/><path d="M470,313.8 L472.2,316 L470,318.2 L467.8,316 Z" fill="none" stroke="#9cc89f" stroke-width="0.8" opacity="0.55"/><path d="M424,206.8 L426.2,209 L424,211.2 L421.8,209 Z" fill="none" stroke="#9cc89f" stroke-width="0.8" opacity="0.55"/><path d="M412,243.8 L414.2,246 L412,248.2 L409.8,246 Z" fill="none" stroke="#9cc89f" stroke-width="0.8" opacity="0.55"/><path d="M449.9,398.7 L452.09999999999997,400.9 L449.9,403.09999999999997 L447.7,400.9 Z" fill="none" stroke="#9cc89f" stroke-width="0.8" opacity="0.55"/><path d="M457.1,395.90000000000003 L459.3,398.1 L457.1,400.3 L454.90000000000003,398.1 Z" fill="none" stroke="#9cc89f" stroke-width="0.8" opacity="0.55"/><path d="M455.3,401.40000000000003 L457.5,403.6 L455.3,405.8 L453.1,403.6 Z" fill="none" stroke="#9cc89f" stroke-width="0.8" opacity="0.55"/><path d="M428.1,414.1 L430.3,416.3 L428.1,418.5 L425.90000000000003,416.3 Z" fill="none" stroke="#9cc89f" stroke-width="0.8" opacity="0.55"/><path d="M468,411.40000000000003 L470.2,413.6 L468,415.8 L465.8,413.6 Z" fill="none" stroke="#9cc89f" stroke-width="0.8" opacity="0.55"/><path d="M479.8,411.40000000000003 L482.0,413.6 L479.8,415.8 L477.6,413.6 Z" fill="none" stroke="#9cc89f" stroke-width="0.8" opacity="0.55"/><path d="M479.8,395.90000000000003 L482.0,398.1 L479.8,400.3 L477.6,398.1 Z" fill="none" stroke="#9cc89f" stroke-width="0.8" opacity="0.55"/><path d="M494.4,397.8 L496.59999999999997,400 L494.4,402.2 L492.2,400 Z" fill="none" stroke="#9cc89f" stroke-width="0.8" opacity="0.55"/><path d="M487.1,407.8 L489.3,410 L487.1,412.2 L484.90000000000003,410 Z" fill="none" stroke="#9cc89f" stroke-width="0.8" opacity="0.55"/><path d="M300.35,168.10 L302.65,168.10 L302.65,170.85 L305.40,170.85 L305.40,173.15 L302.65,173.15 L302.65,175.90 L300.35,175.90 L300.35,173.15 L297.60,173.15 L297.60,170.85 L300.35,170.85ZM351.85,179.70 L354.15,179.70 L354.15,182.45 L356.90,182.45 L356.90,184.75 L354.15,184.75 L354.15,187.50 L351.85,187.50 L351.85,184.75 L349.10,184.75 L349.10,182.45 L351.85,182.45ZM431.15,177.50 L433.45,177.50 L433.45,180.25 L436.20,180.25 L436.20,182.55 L433.45,182.55 L433.45,185.30 L431.15,185.30 L431.15,182.55 L428.40,182.55 L428.40,180.25 L431.15,180.25ZM303.75,224.60 L306.05,224.60 L306.05,227.35 L308.80,227.35 L308.80,229.65 L306.05,229.65 L306.05,232.40 L303.75,232.40 L303.75,229.65 L301.00,229.65 L301.00,227.35 L303.75,227.35ZM332.95,252.90 L335.25,252.90 L335.25,255.65 L338.00,255.65 L338.00,257.95 L335.25,257.95 L335.25,260.70 L332.95,260.70 L332.95,257.95 L330.20,257.95 L330.20,255.65 L332.95,255.65ZM269.65,261.30 L271.95,261.30 L271.95,264.05 L274.70,264.05 L274.70,266.35 L271.95,266.35 L271.95,269.10 L269.65,269.10 L269.65,266.35 L266.90,266.35 L266.90,264.05 L269.65,264.05ZM244.95,257.70 L247.25,257.70 L247.25,260.45 L250.00,260.45 L250.00,262.75 L247.25,262.75 L247.25,265.50 L244.95,265.50 L244.95,262.75 L242.20,262.75 L242.20,260.45 L244.95,260.45ZM243.65,263.80 L245.95,263.80 L245.95,266.55 L248.70,266.55 L248.70,268.85 L245.95,268.85 L245.95,271.60 L243.65,271.60 L243.65,268.85 L240.90,268.85 L240.90,266.55 L243.65,266.55ZM238.75,266.00 L241.05,266.00 L241.05,268.75 L243.80,268.75 L243.80,271.05 L241.05,271.05 L241.05,273.80 L238.75,273.80 L238.75,271.05 L236.00,271.05 L236.00,268.75 L238.75,268.75ZM240.55,274.40 L242.85,274.40 L242.85,277.15 L245.60,277.15 L245.60,279.45 L242.85,279.45 L242.85,282.20 L240.55,282.20 L240.55,279.45 L237.80,279.45 L237.80,277.15 L240.55,277.15ZM232.65,286.20 L234.95,286.20 L234.95,288.95 L237.70,288.95 L237.70,291.25 L234.95,291.25 L234.95,294.00 L232.65,294.00 L232.65,291.25 L229.90,291.25 L229.90,288.95 L232.65,288.95ZM249.75,294.60 L252.05,294.60 L252.05,297.35 L254.80,297.35 L254.80,299.65 L252.05,299.65 L252.05,302.40 L249.75,302.40 L249.75,299.65 L247.00,299.65 L247.00,297.35 L249.75,297.35ZM238.85,310.60 L241.15,310.60 L241.15,313.35 L243.90,313.35 L243.90,315.65 L241.15,315.65 L241.15,318.40 L238.85,318.40 L238.85,315.65 L236.10,315.65 L236.10,313.35 L238.85,313.35ZM289.45,300.30 L291.75,300.30 L291.75,303.05 L294.50,303.05 L294.50,305.35 L291.75,305.35 L291.75,308.10 L289.45,308.10 L289.45,305.35 L286.70,305.35 L286.70,303.05 L289.45,303.05ZM294.85,305.60 L297.15,305.60 L297.15,308.35 L299.90,308.35 L299.90,310.65 L297.15,310.65 L297.15,313.40 L294.85,313.40 L294.85,310.65 L292.10,310.65 L292.10,308.35 L294.85,308.35ZM268.85,305.40 L271.15,305.40 L271.15,308.15 L273.90,308.15 L273.90,310.45 L271.15,310.45 L271.15,313.20 L268.85,313.20 L268.85,310.45 L266.10,310.45 L266.10,308.15 L268.85,308.15ZM264.65,315.30 L266.95,315.30 L266.95,318.05 L269.70,318.05 L269.70,320.35 L266.95,320.35 L266.95,323.10 L264.65,323.10 L264.65,320.35 L261.90,320.35 L261.90,318.05 L264.65,318.05ZM250.25,321.30 L252.55,321.30 L252.55,324.05 L255.30,324.05 L255.30,326.35 L252.55,326.35 L252.55,329.10 L250.25,329.10 L250.25,326.35 L247.50,326.35 L247.50,324.05 L250.25,324.05ZM257.45,327.30 L259.75,327.30 L259.75,330.05 L262.50,330.05 L262.50,332.35 L259.75,332.35 L259.75,335.10 L257.45,335.10 L257.45,332.35 L254.70,332.35 L254.70,330.05 L257.45,330.05ZM268.25,327.90 L270.55,327.90 L270.55,330.65 L273.30,330.65 L273.30,332.95 L270.55,332.95 L270.55,335.70 L268.25,335.70 L268.25,332.95 L265.50,332.95 L265.50,330.65 L268.25,330.65ZM265.85,334.50 L268.15,334.50 L268.15,337.25 L270.90,337.25 L270.90,339.55 L268.15,339.55 L268.15,342.30 L265.85,342.30 L265.85,339.55 L263.10,339.55 L263.10,337.25 L265.85,337.25ZM265.25,342.30 L267.55,342.30 L267.55,345.05 L270.30,345.05 L270.30,347.35 L267.55,347.35 L267.55,350.10 L265.25,350.10 L265.25,347.35 L262.50,347.35 L262.50,345.05 L265.25,345.05ZM284.55,338.70 L286.85,338.70 L286.85,341.45 L289.60,341.45 L289.60,343.75 L286.85,343.75 L286.85,346.50 L284.55,346.50 L284.55,343.75 L281.80,343.75 L281.80,341.45 L284.55,341.45ZM280.35,344.10 L282.65,344.10 L282.65,346.85 L285.40,346.85 L285.40,349.15 L282.65,349.15 L282.65,351.90 L280.35,351.90 L280.35,349.15 L277.60,349.15 L277.60,346.85 L280.35,346.85ZM313.95,341.70 L316.25,341.70 L316.25,344.45 L319.00,344.45 L319.00,346.75 L316.25,346.75 L316.25,349.50 L313.95,349.50 L313.95,346.75 L311.20,346.75 L311.20,344.45 L313.95,344.45ZM301.35,352.70 L303.65,352.70 L303.65,355.45 L306.40,355.45 L306.40,357.75 L303.65,357.75 L303.65,360.50 L301.35,360.50 L301.35,357.75 L298.60,357.75 L298.60,355.45 L301.35,355.45ZM325.95,360.40 L328.25,360.40 L328.25,363.15 L331.00,363.15 L331.00,365.45 L328.25,365.45 L328.25,368.20 L325.95,368.20 L325.95,365.45 L323.20,365.45 L323.20,363.15 L325.95,363.15ZM276.05,403.30 L278.35,403.30 L278.35,406.05 L281.10,406.05 L281.10,408.35 L278.35,408.35 L278.35,411.10 L276.05,411.10 L276.05,408.35 L273.30,408.35 L273.30,406.05 L276.05,406.05ZM331.65,413.00 L333.95,413.00 L333.95,415.75 L336.70,415.75 L336.70,418.05 L333.95,418.05 L333.95,420.80 L331.65,420.80 L331.65,418.05 L328.90,418.05 L328.90,415.75 L331.65,415.75ZM350.95,419.40 L353.25,419.40 L353.25,422.15 L356.00,422.15 L356.00,424.45 L353.25,424.45 L353.25,427.20 L350.95,427.20 L350.95,424.45 L348.20,424.45 L348.20,422.15 L350.95,422.15ZM354.25,421.00 L356.55,421.00 L356.55,423.75 L359.30,423.75 L359.30,426.05 L356.55,426.05 L356.55,428.80 L354.25,428.80 L354.25,426.05 L351.50,426.05 L351.50,423.75 L354.25,423.75ZM462.35,184.30 L464.65,184.30 L464.65,187.05 L467.40,187.05 L467.40,189.35 L464.65,189.35 L464.65,192.10 L462.35,192.10 L462.35,189.35 L459.60,189.35 L459.60,187.05 L462.35,187.05ZM273.35,419.30 L275.65,419.30 L275.65,422.05 L278.40,422.05 L278.40,424.35 L275.65,424.35 L275.65,427.10 L273.35,427.10 L273.35,424.35 L270.60,424.35 L270.60,422.05 L273.35,422.05ZM273.65,407.60 L275.95,407.60 L275.95,410.35 L278.70,410.35 L278.70,412.65 L275.95,412.65 L275.95,415.40 L273.65,415.40 L273.65,412.65 L270.90,412.65 L270.90,410.35 L273.65,410.35ZM413.35,226.90 L415.65,226.90 L415.65,229.65 L418.40,229.65 L418.40,231.95 L415.65,231.95 L415.65,234.70 L413.35,234.70 L413.35,231.95 L410.60,231.95 L410.60,229.65 L413.35,229.65ZM395.35,261.30 L397.65,261.30 L397.65,264.05 L400.40,264.05 L400.40,266.35 L397.65,266.35 L397.65,269.10 L395.35,269.10 L395.35,266.35 L392.60,266.35 L392.60,264.05 L395.35,264.05ZM395.15,278.20 L397.45,278.20 L397.45,280.95 L400.20,280.95 L400.20,283.25 L397.45,283.25 L397.45,286.00 L395.15,286.00 L395.15,283.25 L392.40,283.25 L392.40,280.95 L395.15,280.95ZM393.35,288.80 L395.65,288.80 L395.65,291.55 L398.40,291.55 L398.40,293.85 L395.65,293.85 L395.65,296.60 L393.35,296.60 L393.35,293.85 L390.60,293.85 L390.60,291.55 L393.35,291.55ZM396.05,289.60 L398.35,289.60 L398.35,292.35 L401.10,292.35 L401.10,294.65 L398.35,294.65 L398.35,297.40 L396.05,297.40 L396.05,294.65 L393.30,294.65 L393.30,292.35 L396.05,292.35ZM474.25,265.10 L476.55,265.10 L476.55,267.85 L479.30,267.85 L479.30,270.15 L476.55,270.15 L476.55,272.90 L474.25,272.90 L474.25,270.15 L471.50,270.15 L471.50,267.85 L474.25,267.85ZM496.15,293.60 L498.45,293.60 L498.45,296.35 L501.20,296.35 L501.20,298.65 L498.45,298.65 L498.45,301.40 L496.15,301.40 L496.15,298.65 L493.40,298.65 L493.40,296.35 L496.15,296.35ZM461.95,307.10 L464.25,307.10 L464.25,309.85 L467.00,309.85 L467.00,312.15 L464.25,312.15 L464.25,314.90 L461.95,314.90 L461.95,312.15 L459.20,312.15 L459.20,309.85 L461.95,309.85ZM455.65,322.50 L457.95,322.50 L457.95,325.25 L460.70,325.25 L460.70,327.55 L457.95,327.55 L457.95,330.30 L455.65,330.30 L455.65,327.55 L452.90,327.55 L452.90,325.25 L455.65,325.25ZM460.55,333.50 L462.85,333.50 L462.85,336.25 L465.60,336.25 L465.60,338.55 L462.85,338.55 L462.85,341.30 L460.55,341.30 L460.55,338.55 L457.80,338.55 L457.80,336.25 L460.55,336.25ZM442.35,342.10 L444.65,342.10 L444.65,344.85 L447.40,344.85 L447.40,347.15 L444.65,347.15 L444.65,349.90 L442.35,349.90 L442.35,347.15 L439.60,347.15 L439.60,344.85 L442.35,344.85ZM449.25,350.40 L451.55,350.40 L451.55,353.15 L454.30,353.15 L454.30,355.45 L451.55,355.45 L451.55,358.20 L449.25,358.20 L449.25,355.45 L446.50,355.45 L446.50,353.15 L449.25,353.15ZM372.85,333.10 L375.15,333.10 L375.15,335.85 L377.90,335.85 L377.90,338.15 L375.15,338.15 L375.15,340.90 L372.85,340.90 L372.85,338.15 L370.10,338.15 L370.10,335.85 L372.85,335.85ZM402.75,342.90 L405.05,342.90 L405.05,345.65 L407.80,345.65 L407.80,347.95 L405.05,347.95 L405.05,350.70 L402.75,350.70 L402.75,347.95 L400.00,347.95 L400.00,345.65 L402.75,345.65ZM374.05,358.70 L376.35,358.70 L376.35,361.45 L379.10,361.45 L379.10,363.75 L376.35,363.75 L376.35,366.50 L374.05,366.50 L374.05,363.75 L371.30,363.75 L371.30,361.45 L374.05,361.45ZM435.15,368.30 L437.45,368.30 L437.45,371.05 L440.20,371.05 L440.20,373.35 L437.45,373.35 L437.45,376.10 L435.15,376.10 L435.15,373.35 L432.40,373.35 L432.40,371.05 L435.15,371.05ZM458.45,364.90 L460.75,364.90 L460.75,367.65 L463.50,367.65 L463.50,369.95 L460.75,369.95 L460.75,372.70 L458.45,372.70 L458.45,369.95 L455.70,369.95 L455.70,367.65 L458.45,367.65ZM496.95,368.10 L499.25,368.10 L499.25,370.85 L502.00,370.85 L502.00,373.15 L499.25,373.15 L499.25,375.90 L496.95,375.90 L496.95,373.15 L494.20,373.15 L494.20,370.85 L496.95,370.85ZM429.05,379.50 L431.35,379.50 L431.35,382.25 L434.10,382.25 L434.10,384.55 L431.35,384.55 L431.35,387.30 L429.05,387.30 L429.05,384.55 L426.30,384.55 L426.30,382.25 L429.05,382.25ZM511.05,338.70 L513.35,338.70 L513.35,341.45 L516.10,341.45 L516.10,343.75 L513.35,343.75 L513.35,346.50 L511.05,346.50 L511.05,343.75 L508.30,343.75 L508.30,341.45 L511.05,341.45ZM424.25,404.20 L426.55,404.20 L426.55,406.95 L429.30,406.95 L429.30,409.25 L426.55,409.25 L426.55,412.00 L424.25,412.00 L424.25,409.25 L421.50,409.25 L421.50,406.95 L424.25,406.95ZM447.85,404.20 L450.15,404.20 L450.15,406.95 L452.90,406.95 L452.90,409.25 L450.15,409.25 L450.15,412.00 L447.85,412.00 L447.85,409.25 L445.10,409.25 L445.10,406.95 L447.85,406.95ZM450.55,402.40 L452.85,402.40 L452.85,405.15 L455.60,405.15 L455.60,407.45 L452.85,407.45 L452.85,410.20 L450.55,410.20 L450.55,407.45 L447.80,407.45 L447.80,405.15 L450.55,405.15ZM460.55,423.30 L462.85,423.30 L462.85,426.05 L465.60,426.05 L465.60,428.35 L462.85,428.35 L462.85,431.10 L460.55,431.10 L460.55,428.35 L457.80,428.35 L457.80,426.05 L460.55,426.05ZM455.05,427.80 L457.35,427.80 L457.35,430.55 L460.10,430.55 L460.10,432.85 L457.35,432.85 L457.35,435.60 L455.05,435.60 L455.05,432.85 L452.30,432.85 L452.30,430.55 L455.05,430.55ZM587.15,239.10 L589.45,239.10 L589.45,241.85 L592.20,241.85 L592.20,244.15 L589.45,244.15 L589.45,246.90 L587.15,246.90 L587.15,244.15 L584.40,244.15 L584.40,241.85 L587.15,241.85ZM544.45,247.60 L546.75,247.60 L546.75,250.35 L549.50,250.35 L549.50,252.65 L546.75,252.65 L546.75,255.40 L544.45,255.40 L544.45,252.65 L541.70,252.65 L541.70,250.35 L544.45,250.35ZM561.35,266.30 L563.65,266.30 L563.65,269.05 L566.40,269.05 L566.40,271.35 L563.65,271.35 L563.65,274.10 L561.35,274.10 L561.35,271.35 L558.60,271.35 L558.60,269.05 L561.35,269.05ZM581.85,273.70 L584.15,273.70 L584.15,276.45 L586.90,276.45 L586.90,278.75 L584.15,278.75 L584.15,281.50 L581.85,281.50 L581.85,278.75 L579.10,278.75 L579.10,276.45 L581.85,276.45ZM557.75,288.50 L560.05,288.50 L560.05,291.25 L562.80,291.25 L562.80,293.55 L560.05,293.55 L560.05,296.30 L557.75,296.30 L557.75,293.55 L555.00,293.55 L555.00,291.25 L557.75,291.25ZM530.35,294.40 L532.65,294.40 L532.65,297.15 L535.40,297.15 L535.40,299.45 L532.65,299.45 L532.65,302.20 L530.35,302.20 L530.35,299.45 L527.60,299.45 L527.60,297.15 L530.35,297.15ZM557.95,288.90 L560.25,288.90 L560.25,291.65 L563.00,291.65 L563.00,293.95 L560.25,293.95 L560.25,296.70 L557.95,296.70 L557.95,293.95 L555.20,293.95 L555.20,291.65 L557.95,291.65ZM532.25,332.40 L534.55,332.40 L534.55,335.15 L537.30,335.15 L537.30,337.45 L534.55,337.45 L534.55,340.20 L532.25,340.20 L532.25,337.45 L529.50,337.45 L529.50,335.15 L532.25,335.15ZM568.55,331.10 L570.85,331.10 L570.85,333.85 L573.60,333.85 L573.60,336.15 L570.85,336.15 L570.85,338.90 L568.55,338.90 L568.55,336.15 L565.80,336.15 L565.80,333.85 L568.55,333.85ZM547.55,351.90 L549.85,351.90 L549.85,354.65 L552.60,354.65 L552.60,356.95 L549.85,356.95 L549.85,359.70 L547.55,359.70 L547.55,356.95 L544.80,356.95 L544.80,354.65 L547.55,354.65ZM547.45,364.60 L549.75,364.60 L549.75,367.35 L552.50,367.35 L552.50,369.65 L549.75,369.65 L549.75,372.40 L547.45,372.40 L547.45,369.65 L544.70,369.65 L544.70,367.35 L547.45,367.35ZM569.35,365.10 L571.65,365.10 L571.65,367.85 L574.40,367.85 L574.40,370.15 L571.65,370.15 L571.65,372.90 L569.35,372.90 L569.35,370.15 L566.60,370.15 L566.60,367.85 L569.35,367.85ZM585.35,344.40 L587.65,344.40 L587.65,347.15 L590.40,347.15 L590.40,349.45 L587.65,349.45 L587.65,352.20 L585.35,352.20 L585.35,349.45 L582.60,349.45 L582.60,347.15 L585.35,347.15ZM596.45,358.50 L598.75,358.50 L598.75,361.25 L601.50,361.25 L601.50,363.55 L598.75,363.55 L598.75,366.30 L596.45,366.30 L596.45,363.55 L593.70,363.55 L593.70,361.25 L596.45,361.25ZM602.85,377.70 L605.15,377.70 L605.15,380.45 L607.90,380.45 L607.90,382.75 L605.15,382.75 L605.15,385.50 L602.85,385.50 L602.85,382.75 L600.10,382.75 L600.10,380.45 L602.85,380.45ZM619.65,376.70 L621.95,376.70 L621.95,379.45 L624.70,379.45 L624.70,381.75 L621.95,381.75 L621.95,384.50 L619.65,384.50 L619.65,381.75 L616.90,381.75 L616.90,379.45 L619.65,379.45ZM620.05,383.80 L622.35,383.80 L622.35,386.55 L625.10,386.55 L625.10,388.85 L622.35,388.85 L622.35,391.60 L620.05,391.60 L620.05,388.85 L617.30,388.85 L617.30,386.55 L620.05,386.55ZM544.95,390.40 L547.25,390.40 L547.25,393.15 L550.00,393.15 L550.00,395.45 L547.25,395.45 L547.25,398.20 L544.95,398.20 L544.95,395.45 L542.20,395.45 L542.20,393.15 L544.95,393.15ZM549.35,390.80 L551.65,390.80 L551.65,393.55 L554.40,393.55 L554.40,395.85 L551.65,395.85 L551.65,398.60 L549.35,398.60 L549.35,395.85 L546.60,395.85 L546.60,393.55 L549.35,393.55ZM561.85,389.80 L564.15,389.80 L564.15,392.55 L566.90,392.55 L566.90,394.85 L564.15,394.85 L564.15,397.60 L561.85,397.60 L561.85,394.85 L559.10,394.85 L559.10,392.55 L561.85,392.55ZM569.95,387.80 L572.25,387.80 L572.25,390.55 L575.00,390.55 L575.00,392.85 L572.25,392.85 L572.25,395.60 L569.95,395.60 L569.95,392.85 L567.20,392.85 L567.20,390.55 L569.95,390.55ZM579.65,390.80 L581.95,390.80 L581.95,393.55 L584.70,393.55 L584.70,395.85 L581.95,395.85 L581.95,398.60 L579.65,398.60 L579.65,395.85 L576.90,395.85 L576.90,393.55 L579.65,393.55ZM535.25,396.90 L537.55,396.90 L537.55,399.65 L540.30,399.65 L540.30,401.95 L537.55,401.95 L537.55,404.70 L535.25,404.70 L535.25,401.95 L532.50,401.95 L532.50,399.65 L535.25,399.65ZM624.15,338.30 L626.45,338.30 L626.45,341.05 L629.20,341.05 L629.20,343.35 L626.45,343.35 L626.45,346.10 L624.15,346.10 L624.15,343.35 L621.40,343.35 L621.40,341.05 L624.15,341.05ZM631.15,350.40 L633.45,350.40 L633.45,353.15 L636.20,353.15 L636.20,355.45 L633.45,355.45 L633.45,358.20 L631.15,358.20 L631.15,355.45 L628.40,355.45 L628.40,353.15 L631.15,353.15ZM625.75,357.50 L628.05,357.50 L628.05,360.25 L630.80,360.25 L630.80,362.55 L628.05,362.55 L628.05,365.30 L625.75,365.30 L625.75,362.55 L623.00,362.55 L623.00,360.25 L625.75,360.25ZM636.25,321.80 L638.55,321.80 L638.55,324.55 L641.30,324.55 L641.30,326.85 L638.55,326.85 L638.55,329.60 L636.25,329.60 L636.25,326.85 L633.50,326.85 L633.50,324.55 L636.25,324.55ZM645.35,318.10 L647.65,318.10 L647.65,320.85 L650.40,320.85 L650.40,323.15 L647.65,323.15 L647.65,325.90 L645.35,325.90 L645.35,323.15 L642.60,323.15 L642.60,320.85 L645.35,320.85ZM648.35,334.30 L650.65,334.30 L650.65,337.05 L653.40,337.05 L653.40,339.35 L650.65,339.35 L650.65,342.10 L648.35,342.10 L648.35,339.35 L645.60,339.35 L645.60,337.05 L648.35,337.05ZM627.85,402.70 L630.15,402.70 L630.15,405.45 L632.90,405.45 L632.90,407.75 L630.15,407.75 L630.15,410.50 L627.85,410.50 L627.85,407.75 L625.10,407.75 L625.10,405.45 L627.85,405.45ZM634.45,406.10 L636.75,406.10 L636.75,408.85 L639.50,408.85 L639.50,411.15 L636.75,411.15 L636.75,413.90 L634.45,413.90 L634.45,411.15 L631.70,411.15 L631.70,408.85 L634.45,408.85ZM615.15,413.20 L617.45,413.20 L617.45,415.95 L620.20,415.95 L620.20,418.25 L617.45,418.25 L617.45,421.00 L615.15,421.00 L615.15,418.25 L612.40,418.25 L612.40,415.95 L615.15,415.95ZM642.85,422.40 L645.15,422.40 L645.15,425.15 L647.90,425.15 L647.90,427.45 L645.15,427.45 L645.15,430.20 L642.85,430.20 L642.85,427.45 L640.10,427.45 L640.10,425.15 L642.85,425.15ZM629.65,450.10 L631.95,450.10 L631.95,452.85 L634.70,452.85 L634.70,455.15 L631.95,455.15 L631.95,457.90 L629.65,457.90 L629.65,455.15 L626.90,455.15 L626.90,452.85 L629.65,452.85ZM643.15,258.50 L645.45,258.50 L645.45,261.25 L648.20,261.25 L648.20,263.55 L645.45,263.55 L645.45,266.30 L643.15,266.30 L643.15,263.55 L640.40,263.55 L640.40,261.25 L643.15,261.25ZM658.75,255.50 L661.05,255.50 L661.05,258.25 L663.80,258.25 L663.80,260.55 L661.05,260.55 L661.05,263.30 L658.75,263.30 L658.75,260.55 L656.00,260.55 L656.00,258.25 L658.75,258.25ZM665.35,256.70 L667.65,256.70 L667.65,259.45 L670.40,259.45 L670.40,261.75 L667.65,261.75 L667.65,264.50 L665.35,264.50 L665.35,261.75 L662.60,261.75 L662.60,259.45 L665.35,259.45ZM668.35,253.10 L670.65,253.10 L670.65,255.85 L673.40,255.85 L673.40,258.15 L670.65,258.15 L670.65,260.90 L668.35,260.90 L668.35,258.15 L665.60,258.15 L665.60,255.85 L668.35,255.85ZM659.35,268.70 L661.65,268.70 L661.65,271.45 L664.40,271.45 L664.40,273.75 L661.65,273.75 L661.65,276.50 L659.35,276.50 L659.35,273.75 L656.60,273.75 L656.60,271.45 L659.35,271.45ZM644.35,272.90 L646.65,272.90 L646.65,275.65 L649.40,275.65 L649.40,277.95 L646.65,277.95 L646.65,280.70 L644.35,280.70 L644.35,277.95 L641.60,277.95 L641.60,275.65 L644.35,275.65ZM650.95,272.30 L653.25,272.30 L653.25,275.05 L656.00,275.05 L656.00,277.35 L653.25,277.35 L653.25,280.10 L650.95,280.10 L650.95,277.35 L648.20,277.35 L648.20,275.05 L650.95,275.05ZM647.35,280.70 L649.65,280.70 L649.65,283.45 L652.40,283.45 L652.40,285.75 L649.65,285.75 L649.65,288.50 L647.35,288.50 L647.35,285.75 L644.60,285.75 L644.60,283.45 L647.35,283.45ZM653.35,280.10 L655.65,280.10 L655.65,282.85 L658.40,282.85 L658.40,285.15 L655.65,285.15 L655.65,287.90 L653.35,287.90 L653.35,285.15 L650.60,285.15 L650.60,282.85 L653.35,282.85ZM662.95,283.10 L665.25,283.10 L665.25,285.85 L668.00,285.85 L668.00,288.15 L665.25,288.15 L665.25,290.90 L662.95,290.90 L662.95,288.15 L660.20,288.15 L660.20,285.85 L662.95,285.85ZM655.15,292.80 L657.45,292.80 L657.45,295.55 L660.20,295.55 L660.20,297.85 L657.45,297.85 L657.45,300.60 L655.15,300.60 L655.15,297.85 L652.40,297.85 L652.40,295.55 L655.15,295.55ZM659.35,296.40 L661.65,296.40 L661.65,299.15 L664.40,299.15 L664.40,301.45 L661.65,301.45 L661.65,304.20 L659.35,304.20 L659.35,301.45 L656.60,301.45 L656.60,299.15 L659.35,299.15ZM658.15,300.00 L660.45,300.00 L660.45,302.75 L663.20,302.75 L663.20,305.05 L660.45,305.05 L660.45,307.80 L658.15,307.80 L658.15,305.05 L655.40,305.05 L655.40,302.75 L658.15,302.75ZM692.95,202.10 L695.25,202.10 L695.25,204.85 L698.00,204.85 L698.00,207.15 L695.25,207.15 L695.25,209.90 L692.95,209.90 L692.95,207.15 L690.20,207.15 L690.20,204.85 L692.95,204.85ZM689.85,213.10 L692.15,213.10 L692.15,215.85 L694.90,215.85 L694.90,218.15 L692.15,218.15 L692.15,220.90 L689.85,220.90 L689.85,218.15 L687.10,218.15 L687.10,215.85 L689.85,215.85ZM685.85,222.70 L688.15,222.70 L688.15,225.45 L690.90,225.45 L690.90,227.75 L688.15,227.75 L688.15,230.50 L685.85,230.50 L685.85,227.75 L683.10,227.75 L683.10,225.45 L685.85,225.45ZM688.95,232.40 L691.25,232.40 L691.25,235.15 L694.00,235.15 L694.00,237.45 L691.25,237.45 L691.25,240.20 L688.95,240.20 L688.95,237.45 L686.20,237.45 L686.20,235.15 L688.95,235.15ZM682.85,235.50 L685.15,235.50 L685.15,238.25 L687.90,238.25 L687.90,240.55 L685.15,240.55 L685.15,243.30 L682.85,243.30 L682.85,240.55 L680.10,240.55 L680.10,238.25 L682.85,238.25ZM678.85,227.10 L681.15,227.10 L681.15,229.85 L683.90,229.85 L683.90,232.15 L681.15,232.15 L681.15,234.90 L678.85,234.90 L678.85,232.15 L676.10,232.15 L676.10,229.85 L678.85,229.85ZM663.15,220.60 L665.45,220.60 L665.45,223.35 L668.20,223.35 L668.20,225.65 L665.45,225.65 L665.45,228.40 L663.15,228.40 L663.15,225.65 L660.40,225.65 L660.40,223.35 L663.15,223.35Z" fill="#fff" stroke="#4f63d2" stroke-width="1"/><circle cx="264.4" cy="167.1" r="16.3" fill="rgb(210,48,42)" fill-opacity="0.8" stroke="#fff" stroke-opacity="0.6" stroke-width="0.7"/><circle cx="249" cy="192.2" r="3.6" fill="rgb(210,48,42)" fill-opacity="0.8" stroke="#fff" stroke-opacity="0.6" stroke-width="0.7"/><circle cx="313.9" cy="173.8" r="3" fill="rgb(210,48,42)" fill-opacity="0.8" stroke="#fff" stroke-opacity="0.6" stroke-width="0.7"/><circle cx="357.3" cy="196.4" r="1.5" fill="rgb(210,48,42)" fill-opacity="0.85"/><circle cx="450.6" cy="198.9" r="19.5" fill="rgb(210,48,42)" fill-opacity="0.8" stroke="#fff" stroke-opacity="0.6" stroke-width="0.7"/><circle cx="252.4" cy="262.7" r="1.8" fill="rgb(210,48,42)" fill-opacity="0.85"/><circle cx="245.8" cy="278.7" r="1" fill="rgb(210,48,42)" fill-opacity="0.85"/><circle cx="270" cy="314.4" r="3.6" fill="rgb(210,48,42)" fill-opacity="0.8" stroke="#fff" stroke-opacity="0.6" stroke-width="0.7"/><circle cx="262.8" cy="329.8" r="2" fill="rgb(210,48,42)" fill-opacity="0.85"/><circle cx="274.5" cy="419.6" r="10.5" fill="rgb(210,48,42)" fill-opacity="0.8" stroke="#fff" stroke-opacity="0.6" stroke-width="0.7"/><circle cx="419.3" cy="363.8" r="6.3" fill="rgb(210,48,42)" fill-opacity="0.8" stroke="#fff" stroke-opacity="0.6" stroke-width="0.7"/><circle cx="470.8" cy="330.2" r="2.3" fill="rgb(210,48,42)" fill-opacity="0.85"/><circle cx="516.4" cy="340.4" r="1.7" fill="rgb(210,48,42)" fill-opacity="0.85"/><circle cx="558.9" cy="329.9" r="3.3" fill="rgb(210,48,42)" fill-opacity="0.8" stroke="#fff" stroke-opacity="0.6" stroke-width="0.7"/><circle cx="566.1" cy="302.9" r="1" fill="rgb(210,48,42)" fill-opacity="0.85"/><circle cx="489.3" cy="299.1" r="1" fill="rgb(210,48,42)" fill-opacity="0.85"/><circle cx="534.8" cy="236.4" r="1.3" fill="rgb(210,48,42)" fill-opacity="0.85"/><circle cx="563.1" cy="257.2" r="1.2" fill="rgb(210,48,42)" fill-opacity="0.85"/><circle cx="521.6" cy="266.5" r="1.7" fill="rgb(210,48,42)" fill-opacity="0.85"/><circle cx="612.3" cy="253.5" r="3.6" fill="rgb(210,48,42)" fill-opacity="0.8" stroke="#fff" stroke-opacity="0.6" stroke-width="0.7"/><circle cx="600.3" cy="258.4" r="1" fill="rgb(210,48,42)" fill-opacity="0.85"/><circle cx="617.7" cy="267.2" r="1.2" fill="rgb(210,48,42)" fill-opacity="0.85"/><circle cx="560.3" cy="279.2" r="2.6" fill="rgb(210,48,42)" fill-opacity="0.85"/><circle cx="580.5" cy="285" r="0.9" fill="rgb(210,48,42)" fill-opacity="0.85"/><circle cx="566.3" cy="302.6" r="1" fill="rgb(210,48,42)" fill-opacity="0.85"/><circle cx="595.9" cy="321.9" r="2.2" fill="rgb(210,48,42)" fill-opacity="0.85"/><circle cx="593.7" cy="275" r="0.8" fill="rgb(210,48,42)" fill-opacity="0.85"/><circle cx="665.3" cy="251.6" r="2.6" fill="rgb(210,48,42)" fill-opacity="0.85"/><circle cx="654.5" cy="255.2" r="1.5" fill="rgb(210,48,42)" fill-opacity="0.85"/><circle cx="677" cy="246.8" r="1" fill="rgb(210,48,42)" fill-opacity="0.85"/><circle cx="618.2" cy="267.2" r="1.1" fill="rgb(210,48,42)" fill-opacity="0.85"/><circle cx="640.7" cy="293.6" r="1" fill="rgb(210,48,42)" fill-opacity="0.85"/><circle cx="623" cy="311" r="1" fill="rgb(210,48,42)" fill-opacity="0.85"/><circle cx="596.2" cy="321.9" r="2.3" fill="rgb(210,48,42)" fill-opacity="0.85"/><circle cx="565" cy="386.7" r="3.2" fill="rgb(210,48,42)" fill-opacity="0.8" stroke="#fff" stroke-opacity="0.6" stroke-width="0.7"/><circle cx="529.3" cy="389.7" r="1" fill="rgb(210,48,42)" fill-opacity="0.85"/><circle cx="651.5" cy="332.1" r="3.5" fill="rgb(210,48,42)" fill-opacity="0.8" stroke="#fff" stroke-opacity="0.6" stroke-width="0.7"/><circle cx="615.3" cy="401.8" r="3.3" fill="rgb(210,48,42)" fill-opacity="0.8" stroke="#fff" stroke-opacity="0.6" stroke-width="0.7"/><circle cx="596" cy="322" r="1.5" fill="rgb(210,48,42)" fill-opacity="0.85"/><circle cx="594" cy="377" r="0.8" fill="rgb(210,48,42)" fill-opacity="0.85"/><circle cx="685.3" cy="219.2" r="4.4" fill="rgb(210,48,42)" fill-opacity="0.8" stroke="#fff" stroke-opacity="0.6" stroke-width="0.7"/><circle cx="646.5" cy="225.7" r="4.4" fill="rgb(210,48,42)" fill-opacity="0.8" stroke="#fff" stroke-opacity="0.6" stroke-width="0.7"/><circle cx="498.6" cy="218.1" r="1" fill="rgb(210,48,42)" fill-opacity="0.85"/><circle cx="479.9" cy="260.8" r="1" fill="rgb(210,48,42)" fill-opacity="0.85"/><circle cx="336" cy="264.8" r="1" fill="rgb(210,48,42)" fill-opacity="0.85"/><circle cx="390.9" cy="283.6" r="1" fill="rgb(210,48,42)" fill-opacity="0.85"/><circle cx="453.5" cy="407.2" r="0.8" fill="rgb(210,48,42)" fill-opacity="0.85"/><circle cx="483.5" cy="403.6" r="1" fill="rgb(210,48,42)" fill-opacity="0.85"/><circle cx="373" cy="343" r="0.7" fill="rgb(210,48,42)" fill-opacity="0.85"/><circle cx="254.4" cy="296.3" r="0.6" fill="rgb(210,48,42)" fill-opacity="0.85"/><circle cx="235.5" cy="282.4" r="0.7" fill="rgb(210,48,42)" fill-opacity="0.85"/><circle cx="251.7" cy="318.9" r="0.8" fill="rgb(210,48,42)" fill-opacity="0.85"/><circle cx="267.8" cy="159.5" r="4.6" fill="rgb(190,40,40)" fill-opacity="0.5" stroke="#fff" stroke-opacity="0.8" stroke-width="0.8"/></g>

<rect x="44" y="64" width="955" height="22" fill="#000"/>
<rect x="10" y="64" width="34" height="619" fill="#000"/>
<g stroke="#a9a9a9" stroke-width="1"><line x1="44.5" y1="64" x2="44.5" y2="86" /><line x1="49.5" y1="81" x2="49.5" y2="86" /><line x1="54.5" y1="81" x2="54.5" y2="86" /><line x1="59.5" y1="81" x2="59.5" y2="86" /><line x1="64.5" y1="81" x2="64.5" y2="86" /><line x1="69.5" y1="75" x2="69.5" y2="86" /><line x1="74.5" y1="81" x2="74.5" y2="86" /><line x1="79.5" y1="81" x2="79.5" y2="86" /><line x1="84.5" y1="81" x2="84.5" y2="86" /><line x1="89.5" y1="81" x2="89.5" y2="86" /><line x1="94.5" y1="64" x2="94.5" y2="86" /><line x1="99.5" y1="81" x2="99.5" y2="86" /><line x1="104.5" y1="81" x2="104.5" y2="86" /><line x1="109.5" y1="81" x2="109.5" y2="86" /><line x1="114.5" y1="81" x2="114.5" y2="86" /><line x1="119.5" y1="75" x2="119.5" y2="86" /><line x1="124.5" y1="81" x2="124.5" y2="86" /><line x1="129.5" y1="81" x2="129.5" y2="86" /><line x1="134.5" y1="81" x2="134.5" y2="86" /><line x1="139.5" y1="81" x2="139.5" y2="86" /><line x1="144.5" y1="64" x2="144.5" y2="86" /><line x1="149.5" y1="81" x2="149.5" y2="86" /><line x1="154.5" y1="81" x2="154.5" y2="86" /><line x1="159.5" y1="81" x2="159.5" y2="86" /><line x1="164.5" y1="81" x2="164.5" y2="86" /><line x1="169.5" y1="75" x2="169.5" y2="86" /><line x1="174.5" y1="81" x2="174.5" y2="86" /><line x1="179.5" y1="81" x2="179.5" y2="86" /><line x1="184.5" y1="81" x2="184.5" y2="86" /><line x1="189.5" y1="81" x2="189.5" y2="86" /><line x1="194.5" y1="64" x2="194.5" y2="86" /><line x1="199.5" y1="81" x2="199.5" y2="86" /><line x1="204.5" y1="81" x2="204.5" y2="86" /><line x1="209.5" y1="81" x2="209.5" y2="86" /><line x1="214.5" y1="81" x2="214.5" y2="86" /><line x1="219.5" y1="75" x2="219.5" y2="86" /><line x1="224.5" y1="81" x2="224.5" y2="86" /><line x1="229.5" y1="81" x2="229.5" y2="86" /><line x1="234.5" y1="81" x2="234.5" y2="86" /><line x1="239.5" y1="81" x2="239.5" y2="86" /><line x1="244.5" y1="64" x2="244.5" y2="86" /><line x1="249.5" y1="81" x2="249.5" y2="86" /><line x1="254.5" y1="81" x2="254.5" y2="86" /><line x1="259.5" y1="81" x2="259.5" y2="86" /><line x1="264.5" y1="81" x2="264.5" y2="86" /><line x1="269.5" y1="75" x2="269.5" y2="86" /><line x1="274.5" y1="81" x2="274.5" y2="86" /><line x1="279.5" y1="81" x2="279.5" y2="86" /><line x1="284.5" y1="81" x2="284.5" y2="86" /><line x1="289.5" y1="81" x2="289.5" y2="86" /><line x1="294.5" y1="64" x2="294.5" y2="86" /><line x1="299.5" y1="81" x2="299.5" y2="86" /><line x1="304.5" y1="81" x2="304.5" y2="86" /><line x1="309.5" y1="81" x2="309.5" y2="86" /><line x1="314.5" y1="81" x2="314.5" y2="86" /><line x1="319.5" y1="75" x2="319.5" y2="86" /><line x1="324.5" y1="81" x2="324.5" y2="86" /><line x1="329.5" y1="81" x2="329.5" y2="86" /><line x1="334.5" y1="81" x2="334.5" y2="86" /><line x1="339.5" y1="81" x2="339.5" y2="86" /><line x1="344.5" y1="64" x2="344.5" y2="86" /><line x1="349.5" y1="81" x2="349.5" y2="86" /><line x1="354.5" y1="81" x2="354.5" y2="86" /><line x1="359.5" y1="81" x2="359.5" y2="86" /><line x1="364.5" y1="81" x2="364.5" y2="86" /><line x1="369.5" y1="75" x2="369.5" y2="86" /><line x1="374.5" y1="81" x2="374.5" y2="86" /><line x1="379.5" y1="81" x2="379.5" y2="86" /><line x1="384.5" y1="81" x2="384.5" y2="86" /><line x1="389.5" y1="81" x2="389.5" y2="86" /><line x1="394.5" y1="64" x2="394.5" y2="86" /><line x1="399.5" y1="81" x2="399.5" y2="86" /><line x1="404.5" y1="81" x2="404.5" y2="86" /><line x1="409.5" y1="81" x2="409.5" y2="86" /><line x1="414.5" y1="81" x2="414.5" y2="86" /><line x1="419.5" y1="75" x2="419.5" y2="86" /><line x1="424.5" y1="81" x2="424.5" y2="86" /><line x1="429.5" y1="81" x2="429.5" y2="86" /><line x1="434.5" y1="81" x2="434.5" y2="86" /><line x1="439.5" y1="81" x2="439.5" y2="86" /><line x1="444.5" y1="64" x2="444.5" y2="86" /><line x1="449.5" y1="81" x2="449.5" y2="86" /><line x1="454.5" y1="81" x2="454.5" y2="86" /><line x1="459.5" y1="81" x2="459.5" y2="86" /><line x1="464.5" y1="81" x2="464.5" y2="86" /><line x1="469.5" y1="75" x2="469.5" y2="86" /><line x1="474.5" y1="81" x2="474.5" y2="86" /><line x1="479.5" y1="81" x2="479.5" y2="86" /><line x1="484.5" y1="81" x2="484.5" y2="86" /><line x1="489.5" y1="81" x2="489.5" y2="86" /><line x1="494.5" y1="64" x2="494.5" y2="86" /><line x1="499.5" y1="81" x2="499.5" y2="86" /><line x1="504.5" y1="81" x2="504.5" y2="86" /><line x1="509.5" y1="81" x2="509.5" y2="86" /><line x1="514.5" y1="81" x2="514.5" y2="86" /><line x1="519.5" y1="75" x2="519.5" y2="86" /><line x1="524.5" y1="81" x2="524.5" y2="86" /><line x1="529.5" y1="81" x2="529.5" y2="86" /><line x1="534.5" y1="81" x2="534.5" y2="86" /><line x1="539.5" y1="81" x2="539.5" y2="86" /><line x1="544.5" y1="64" x2="544.5" y2="86" /><line x1="549.5" y1="81" x2="549.5" y2="86" /><line x1="554.5" y1="81" x2="554.5" y2="86" /><line x1="559.5" y1="81" x2="559.5" y2="86" /><line x1="564.5" y1="81" x2="564.5" y2="86" /><line x1="569.5" y1="75" x2="569.5" y2="86" /><line x1="574.5" y1="81" x2="574.5" y2="86" /><line x1="579.5" y1="81" x2="579.5" y2="86" /><line x1="584.5" y1="81" x2="584.5" y2="86" /><line x1="589.5" y1="81" x2="589.5" y2="86" /><line x1="594.5" y1="64" x2="594.5" y2="86" /><line x1="599.5" y1="81" x2="599.5" y2="86" /><line x1="604.5" y1="81" x2="604.5" y2="86" /><line x1="609.5" y1="81" x2="609.5" y2="86" /><line x1="614.5" y1="81" x2="614.5" y2="86" /><line x1="619.5" y1="75" x2="619.5" y2="86" /><line x1="624.5" y1="81" x2="624.5" y2="86" /><line x1="629.5" y1="81" x2="629.5" y2="86" /><line x1="634.5" y1="81" x2="634.5" y2="86" /><line x1="639.5" y1="81" x2="639.5" y2="86" /><line x1="644.5" y1="64" x2="644.5" y2="86" /><line x1="649.5" y1="81" x2="649.5" y2="86" /><line x1="654.5" y1="81" x2="654.5" y2="86" /><line x1="659.5" y1="81" x2="659.5" y2="86" /><line x1="664.5" y1="81" x2="664.5" y2="86" /><line x1="669.5" y1="75" x2="669.5" y2="86" /><line x1="674.5" y1="81" x2="674.5" y2="86" /><line x1="679.5" y1="81" x2="679.5" y2="86" /><line x1="684.5" y1="81" x2="684.5" y2="86" /><line x1="689.5" y1="81" x2="689.5" y2="86" /><line x1="694.5" y1="64" x2="694.5" y2="86" /><line x1="699.5" y1="81" x2="699.5" y2="86" /><line x1="704.5" y1="81" x2="704.5" y2="86" /><line x1="709.5" y1="81" x2="709.5" y2="86" /><line x1="714.5" y1="81" x2="714.5" y2="86" /><line x1="719.5" y1="75" x2="719.5" y2="86" /><line x1="724.5" y1="81" x2="724.5" y2="86" /><line x1="729.5" y1="81" x2="729.5" y2="86" /><line x1="734.5" y1="81" x2="734.5" y2="86" /><line x1="739.5" y1="81" x2="739.5" y2="86" /><line x1="744.5" y1="64" x2="744.5" y2="86" /><line x1="749.5" y1="81" x2="749.5" y2="86" /><line x1="754.5" y1="81" x2="754.5" y2="86" /><line x1="759.5" y1="81" x2="759.5" y2="86" /><line x1="764.5" y1="81" x2="764.5" y2="86" /><line x1="769.5" y1="75" x2="769.5" y2="86" /><line x1="774.5" y1="81" x2="774.5" y2="86" /><line x1="779.5" y1="81" x2="779.5" y2="86" /><line x1="784.5" y1="81" x2="784.5" y2="86" /><line x1="789.5" y1="81" x2="789.5" y2="86" /><line x1="794.5" y1="64" x2="794.5" y2="86" /><line x1="799.5" y1="81" x2="799.5" y2="86" /><line x1="804.5" y1="81" x2="804.5" y2="86" /><line x1="809.5" y1="81" x2="809.5" y2="86" /><line x1="814.5" y1="81" x2="814.5" y2="86" /><line x1="819.5" y1="75" x2="819.5" y2="86" /><line x1="824.5" y1="81" x2="824.5" y2="86" /><line x1="829.5" y1="81" x2="829.5" y2="86" /><line x1="834.5" y1="81" x2="834.5" y2="86" /><line x1="839.5" y1="81" x2="839.5" y2="86" /><line x1="844.5" y1="64" x2="844.5" y2="86" /><line x1="849.5" y1="81" x2="849.5" y2="86" /><line x1="854.5" y1="81" x2="854.5" y2="86" /><line x1="859.5" y1="81" x2="859.5" y2="86" /><line x1="864.5" y1="81" x2="864.5" y2="86" /><line x1="869.5" y1="75" x2="869.5" y2="86" /><line x1="874.5" y1="81" x2="874.5" y2="86" /><line x1="879.5" y1="81" x2="879.5" y2="86" /><line x1="884.5" y1="81" x2="884.5" y2="86" /><line x1="889.5" y1="81" x2="889.5" y2="86" /><line x1="894.5" y1="64" x2="894.5" y2="86" /><line x1="899.5" y1="81" x2="899.5" y2="86" /><line x1="904.5" y1="81" x2="904.5" y2="86" /><line x1="909.5" y1="81" x2="909.5" y2="86" /><line x1="914.5" y1="81" x2="914.5" y2="86" /><line x1="919.5" y1="75" x2="919.5" y2="86" /><line x1="924.5" y1="81" x2="924.5" y2="86" /><line x1="929.5" y1="81" x2="929.5" y2="86" /><line x1="934.5" y1="81" x2="934.5" y2="86" /><line x1="939.5" y1="81" x2="939.5" y2="86" /><line x1="944.5" y1="64" x2="944.5" y2="86" /><line x1="949.5" y1="81" x2="949.5" y2="86" /><line x1="954.5" y1="81" x2="954.5" y2="86" /><line x1="959.5" y1="81" x2="959.5" y2="86" /><line x1="964.5" y1="81" x2="964.5" y2="86" /><line x1="969.5" y1="75" x2="969.5" y2="86" /><line x1="974.5" y1="81" x2="974.5" y2="86" /><line x1="979.5" y1="81" x2="979.5" y2="86" /><line x1="984.5" y1="81" x2="984.5" y2="86" /><line x1="989.5" y1="81" x2="989.5" y2="86" /><line x1="994.5" y1="64" x2="994.5" y2="86" /></g>
<g stroke="#a9a9a9" stroke-width="1"><line x1="10" y1="86.5" x2="44" y2="86.5" /><line x1="36" y1="91.5" x2="44" y2="91.5" /><line x1="36" y1="96.5" x2="44" y2="96.5" /><line x1="36" y1="101.5" x2="44" y2="101.5" /><line x1="36" y1="106.5" x2="44" y2="106.5" /><line x1="27" y1="111.5" x2="44" y2="111.5" /><line x1="36" y1="116.5" x2="44" y2="116.5" /><line x1="36" y1="121.5" x2="44" y2="121.5" /><line x1="36" y1="126.5" x2="44" y2="126.5" /><line x1="36" y1="131.5" x2="44" y2="131.5" /><line x1="19" y1="136.5" x2="44" y2="136.5" /><line x1="36" y1="141.5" x2="44" y2="141.5" /><line x1="36" y1="146.5" x2="44" y2="146.5" /><line x1="36" y1="151.5" x2="44" y2="151.5" /><line x1="36" y1="156.5" x2="44" y2="156.5" /><line x1="27" y1="161.5" x2="44" y2="161.5" /><line x1="36" y1="166.5" x2="44" y2="166.5" /><line x1="36" y1="171.5" x2="44" y2="171.5" /><line x1="36" y1="176.5" x2="44" y2="176.5" /><line x1="36" y1="181.5" x2="44" y2="181.5" /><line x1="10" y1="186.5" x2="44" y2="186.5" /><line x1="36" y1="191.5" x2="44" y2="191.5" /><line x1="36" y1="196.5" x2="44" y2="196.5" /><line x1="36" y1="201.5" x2="44" y2="201.5" /><line x1="36" y1="206.5" x2="44" y2="206.5" /><line x1="27" y1="211.5" x2="44" y2="211.5" /><line x1="36" y1="216.5" x2="44" y2="216.5" /><line x1="36" y1="221.5" x2="44" y2="221.5" /><line x1="36" y1="226.5" x2="44" y2="226.5" /><line x1="36" y1="231.5" x2="44" y2="231.5" /><line x1="19" y1="236.5" x2="44" y2="236.5" /><line x1="36" y1="241.5" x2="44" y2="241.5" /><line x1="36" y1="246.5" x2="44" y2="246.5" /><line x1="36" y1="251.5" x2="44" y2="251.5" /><line x1="36" y1="256.5" x2="44" y2="256.5" /><line x1="27" y1="261.5" x2="44" y2="261.5" /><line x1="36" y1="266.5" x2="44" y2="266.5" /><line x1="36" y1="271.5" x2="44" y2="271.5" /><line x1="36" y1="276.5" x2="44" y2="276.5" /><line x1="36" y1="281.5" x2="44" y2="281.5" /><line x1="10" y1="286.5" x2="44" y2="286.5" /><line x1="36" y1="291.5" x2="44" y2="291.5" /><line x1="36" y1="296.5" x2="44" y2="296.5" /><line x1="36" y1="301.5" x2="44" y2="301.5" /><line x1="36" y1="306.5" x2="44" y2="306.5" /><line x1="27" y1="311.5" x2="44" y2="311.5" /><line x1="36" y1="316.5" x2="44" y2="316.5" /><line x1="36" y1="321.5" x2="44" y2="321.5" /><line x1="36" y1="326.5" x2="44" y2="326.5" /><line x1="36" y1="331.5" x2="44" y2="331.5" /><line x1="19" y1="336.5" x2="44" y2="336.5" /><line x1="36" y1="341.5" x2="44" y2="341.5" /><line x1="36" y1="346.5" x2="44" y2="346.5" /><line x1="36" y1="351.5" x2="44" y2="351.5" /><line x1="36" y1="356.5" x2="44" y2="356.5" /><line x1="27" y1="361.5" x2="44" y2="361.5" /><line x1="36" y1="366.5" x2="44" y2="366.5" /><line x1="36" y1="371.5" x2="44" y2="371.5" /><line x1="36" y1="376.5" x2="44" y2="376.5" /><line x1="36" y1="381.5" x2="44" y2="381.5" /><line x1="10" y1="386.5" x2="44" y2="386.5" /><line x1="36" y1="391.5" x2="44" y2="391.5" /><line x1="36" y1="396.5" x2="44" y2="396.5" /><line x1="36" y1="401.5" x2="44" y2="401.5" /><line x1="36" y1="406.5" x2="44" y2="406.5" /><line x1="27" y1="411.5" x2="44" y2="411.5" /><line x1="36" y1="416.5" x2="44" y2="416.5" /><line x1="36" y1="421.5" x2="44" y2="421.5" /><line x1="36" y1="426.5" x2="44" y2="426.5" /><line x1="36" y1="431.5" x2="44" y2="431.5" /><line x1="19" y1="436.5" x2="44" y2="436.5" /><line x1="36" y1="441.5" x2="44" y2="441.5" /><line x1="36" y1="446.5" x2="44" y2="446.5" /><line x1="36" y1="451.5" x2="44" y2="451.5" /><line x1="36" y1="456.5" x2="44" y2="456.5" /><line x1="27" y1="461.5" x2="44" y2="461.5" /><line x1="36" y1="466.5" x2="44" y2="466.5" /><line x1="36" y1="471.5" x2="44" y2="471.5" /><line x1="36" y1="476.5" x2="44" y2="476.5" /><line x1="36" y1="481.5" x2="44" y2="481.5" /><line x1="10" y1="486.5" x2="44" y2="486.5" /><line x1="36" y1="491.5" x2="44" y2="491.5" /><line x1="36" y1="496.5" x2="44" y2="496.5" /><line x1="36" y1="501.5" x2="44" y2="501.5" /><line x1="36" y1="506.5" x2="44" y2="506.5" /><line x1="27" y1="511.5" x2="44" y2="511.5" /><line x1="36" y1="516.5" x2="44" y2="516.5" /><line x1="36" y1="521.5" x2="44" y2="521.5" /><line x1="36" y1="526.5" x2="44" y2="526.5" /><line x1="36" y1="531.5" x2="44" y2="531.5" /><line x1="19" y1="536.5" x2="44" y2="536.5" /><line x1="36" y1="541.5" x2="44" y2="541.5" /><line x1="36" y1="546.5" x2="44" y2="546.5" /><line x1="36" y1="551.5" x2="44" y2="551.5" /><line x1="36" y1="556.5" x2="44" y2="556.5" /><line x1="27" y1="561.5" x2="44" y2="561.5" /><line x1="36" y1="566.5" x2="44" y2="566.5" /><line x1="36" y1="571.5" x2="44" y2="571.5" /><line x1="36" y1="576.5" x2="44" y2="576.5" /><line x1="36" y1="581.5" x2="44" y2="581.5" /><line x1="10" y1="586.5" x2="44" y2="586.5" /><line x1="36" y1="591.5" x2="44" y2="591.5" /><line x1="36" y1="596.5" x2="44" y2="596.5" /><line x1="36" y1="601.5" x2="44" y2="601.5" /><line x1="36" y1="606.5" x2="44" y2="606.5" /><line x1="27" y1="611.5" x2="44" y2="611.5" /><line x1="36" y1="616.5" x2="44" y2="616.5" /><line x1="36" y1="621.5" x2="44" y2="621.5" /><line x1="36" y1="626.5" x2="44" y2="626.5" /><line x1="36" y1="631.5" x2="44" y2="631.5" /><line x1="19" y1="636.5" x2="44" y2="636.5" /><line x1="36" y1="641.5" x2="44" y2="641.5" /><line x1="36" y1="646.5" x2="44" y2="646.5" /><line x1="36" y1="651.5" x2="44" y2="651.5" /><line x1="36" y1="656.5" x2="44" y2="656.5" /><line x1="27" y1="661.5" x2="44" y2="661.5" /><line x1="36" y1="666.5" x2="44" y2="666.5" /><line x1="36" y1="671.5" x2="44" y2="671.5" /><line x1="36" y1="676.5" x2="44" y2="676.5" /><line x1="36" y1="681.5" x2="44" y2="681.5" /></g>
<g font-size="12" fill="#cfcfcf" stroke="#cfcfcf" stroke-width="0.25"><text x="46.6" y="75">0</text><text x="146.6" y="75">100</text><text x="246.6" y="75">200</text><text x="346.6" y="75">300</text><text x="446.6" y="75">400</text><text x="546.6" y="75">500</text><text x="646.6" y="75">600</text><text x="746.6" y="75">700</text><text x="846.6" y="75">800</text><text x="946.6" y="75">900</text></g>
<g font-size="12" fill="#cfcfcf" stroke="#cfcfcf" stroke-width="0.25"><text transform="translate(21.5,83) rotate(-90)">0</text><text transform="translate(21.5,183) rotate(-90)">100</text><text transform="translate(21.5,283) rotate(-90)">200</text><text transform="translate(21.5,383) rotate(-90)">300</text><text transform="translate(21.5,483) rotate(-90)">400</text><text transform="translate(21.5,583) rotate(-90)">500</text></g>


<defs>
 <linearGradient id="tb" x1="0" y1="0" x2="0" y2="1">
  <stop offset="0" stop-color="#4a4a4a"/><stop offset="1" stop-color="#414141"/>
 </linearGradient>
 <pattern id="dots" width="2" height="2" patternUnits="userSpaceOnUse">
  <rect width="2" height="2" fill="#0f121a"/><rect x="1" y="1" width="1" height="1" fill="#33322c"/>
 </pattern>
 <pattern id="redp" width="6" height="5" patternUnits="userSpaceOnUse">
  <rect width="6" height="5" fill="#652817"/><rect x="2" y="3" width="1" height="1" fill="#7d3524"/>
 </pattern>
</defs>
<rect x="0" y="0" width="999" height="5" fill="url(#redp)"/>
<rect x="130" y="1" width="869" height="1" fill="#a46656"/>
<rect x="10" y="5" width="989" height="1" fill="#9a9a9a"/>
<rect x="44" y="6" width="955" height="58" fill="url(#tb)"/>
<rect x="44" y="6" width="527" height="1" fill="#2c2c2c"/>
<rect x="44" y="7" width="258" height="2" fill="#f4a21d"/>
<rect x="302" y="7" width="269" height="2" fill="#3d9bf2"/>
<rect x="301" y="9" width="2" height="55" fill="#2f2f2f"/>
<rect x="571" y="9" width="1" height="55" fill="#2f2f2f"/>
<rect x="10" y="6" width="34" height="58" fill="url(#dots)"/>
<rect x="0" y="0" width="10" height="683" fill="#0b0e15"/>
<!-- stop icon -->
<circle cx="26.5" cy="22.5" r="5.6" fill="none" stroke="#d8d8d8" stroke-width="1.8"/>
<line x1="22.8" y1="18.8" x2="30.2" y2="26.2" stroke="#d8d8d8" stroke-width="1.8"/>
<!-- waterfall icon -->
<g fill="#e0e0e0">
 <rect x="18" y="41" width="6" height="2"/><rect x="24" y="41" width="11" height="1" fill="#666"/>
 <rect x="21" y="44" width="6" height="2"/>
 <rect x="26" y="47" width="6" height="2"/>
 <rect x="28" y="50" width="6" height="2"/>
</g>
<!-- select boxes -->
<rect x="103" y="12.5" width="185" height="19.5" rx="9.5" fill="#535353"/>
<rect x="373" y="12.5" width="185" height="19.5" rx="9.5" fill="#535353"/>
<text x="55" y="27" font-size="12" fill="#ececec" font-weight="bold" textLength="38" lengthAdjust="spacingAndGlyphs">Device</text>
<text x="112.5" y="27" font-size="13" fill="#f4a21d" textLength="90.4" lengthAdjust="spacingAndGlyphs" stroke="#f4a21d" stroke-width="0.35">&lt;Select model&gt;</text>
<path d="M277,21 L279.5,17 L282,21 Z M277,23 L279.5,27 L282,23 Z" fill="#f4a21d"/>
<text x="315" y="27" font-size="12" fill="#ececec" font-weight="bold" textLength="48" lengthAdjust="spacingAndGlyphs">Network</text>
<text x="381.8" y="27" font-size="13" fill="#3d9bf2" textLength="74.3" lengthAdjust="spacingAndGlyphs" stroke="#3d9bf2" stroke-width="0.35">No throttling</text>
<path d="M546.5,21 L549,17 L551.5,21 Z M546.5,23 L549,27 L551.5,23 Z" fill="#3d9bf2"/>
<!-- row 2 -->
<rect x="58" y="45" width="10.5" height="10" rx="1.5" fill="#5f5f5f" stroke="#2a2a2a" stroke-width="0.8"/>
<path d="M59.8,50 L62.5,53.3 L67.3,45.8" fill="none" stroke="#f4a21d" stroke-width="1.8"/>
<g stroke="#c4c4c4" stroke-width="1.2" fill="none">
 <path d="M77,46 L77,54.5 L87,54.5"/><path d="M74.8,48.3 L77,45.8 L79.2,48.3"/><path d="M84.8,52.3 L87.2,54.5 L84.8,56.7"/>
</g>
<text x="96.8" y="54" font-size="12.5" fill="#f4a21d" font-weight="bold" textLength="22" lengthAdjust="spacingAndGlyphs">921</text>
<text x="127.6" y="54" font-size="12" fill="#c8c8c8" textLength="8.3" lengthAdjust="spacingAndGlyphs" stroke="#c8c8c8" stroke-width="0.35">×</text>
<text x="143.8" y="54" font-size="12.5" fill="#f4a21d" font-weight="bold" textLength="21.8" lengthAdjust="spacingAndGlyphs">568</text>
<g stroke="#f4a21d" stroke-width="1.8" fill="none">
 <path d="M177.5,48.5 A5.3,4.8 0 0 1 187.8,47.5"/><path d="M188.5,50 A5.3,4.8 0 0 1 178.2,51"/>
</g>
<path d="M186,45 L190.5,48.5 L186,49.5 Z M180,53.5 L175.5,50 L180,49 Z" fill="#f4a21d"/>
<line x1="197.5" y1="38" x2="197.5" y2="61" stroke="#262626" stroke-dasharray="1,1"/>
<rect x="209.5" y="44.8" width="9" height="9" fill="none" stroke="#c4c4c4" stroke-width="1.1"/>
<path d="M211.5,46.8 L216.5,51.8 M211.5,46.8 L211.5,49 M211.5,46.8 L213.7,46.8 M216.5,51.8 L216.5,49.6 M216.5,51.8 L214.3,51.8" stroke="#c4c4c4" stroke-width="1"/>
<text x="227.5" y="54" font-size="12.5" fill="#f4a21d" font-weight="bold" textLength="7" lengthAdjust="spacingAndGlyphs">2</text>
<line x1="249.5" y1="38" x2="249.5" y2="61" stroke="#262626" stroke-dasharray="1,1"/>
<rect x="259" y="45" width="10.5" height="10" rx="1.5" fill="#5f5f5f" stroke="#2a2a2a" stroke-width="0.8"/>
<path d="M260.8,50 L263.5,53.3 L268.3,45.8" fill="none" stroke="#f4a21d" stroke-width="1.8"/>
<text x="275.3" y="54" font-size="12.5" fill="#c4c4c4" textLength="14.5" lengthAdjust="spacingAndGlyphs" stroke="#c4c4c4" stroke-width="0.35">Fit</text>
<text x="315" y="54" font-size="12.5" fill="#b0b0b0" textLength="16" lengthAdjust="spacingAndGlyphs" stroke="#b0b0b0" stroke-width="0.35">UA</text>
<text x="338" y="54" font-size="12.5" fill="#3d9bf2" textLength="211" lengthAdjust="spacingAndGlyphs" stroke="#3d9bf2" stroke-width="0.35">Mozilla/5.0 (iPhone; CPU iPhone O...</text>

</svg>
</body></html>
